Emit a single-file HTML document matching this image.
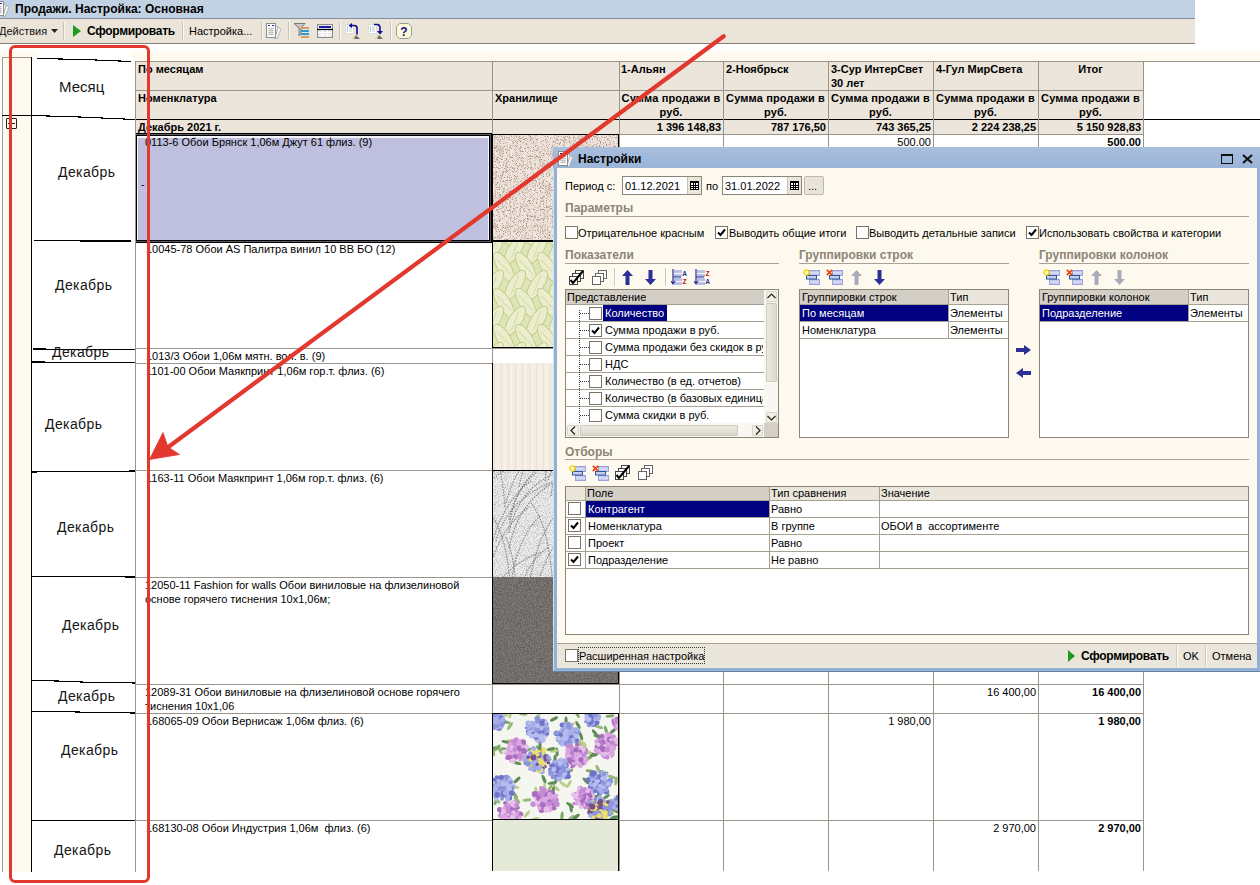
<!DOCTYPE html>
<html><head><meta charset="utf-8">
<style>
*{margin:0;padding:0;box-sizing:border-box}
html,body{width:1260px;height:885px;overflow:hidden;background:#fff}
body{position:relative;font-family:"Liberation Sans",sans-serif;font-size:11px;color:#000}
.a{position:absolute}
.t{position:absolute;white-space:nowrap;line-height:14px}
.b{font-weight:bold}
.r{text-align:right}
.c{text-align:center}
</style></head><body>

<div class="a" style="left:0px;top:0px;width:1195px;height:19px;background:#c3d2e2;border-bottom:1px solid #7f8ea3"></div>
<div class="t b" style="left:15px;top:0px;font-size:12px;line-height:19px">Продажи. Настройка: Основная</div>
<svg class="a" style="left:-7px;top:0px" width="18" height="18" viewBox="0 0 18 18">
<path d="M8 3L16 7L12 17L4 14z" fill="#f4f4f4" stroke="#8a8a8a" stroke-width=".8" stroke-dasharray="1 .6"/>
<path d="M7 2L13 5L10 16L3 14z" fill="#fafafa" stroke="#9a9a9a" stroke-width=".8"/>
<rect x="1.5" y="1.5" width="9" height="14" fill="#fff" stroke="#8c8c8c"/>
<path d="M3 3.5h2M7 3.5h2" stroke="#1a1aa0" stroke-width="1.2"/>
<path d="M3 6.5h6M3 8.5h6M3 10.5h6M3 12.5h6M5 5.5v8M7 5.5v8" stroke="#b8b8b8" stroke-width=".8"/>
</svg>
<div class="a" style="left:0px;top:19px;width:1195px;height:25px;background:#ebe5d9;border-bottom:1px solid #857f74"></div>
<div class="t " style="left:-1px;top:19px;line-height:25px;color:#111">Действия</div>
<svg class="a" style="left:51px;top:29px" width="7" height="4"><path d="M0 0h7L3.5 4z" fill="#222"/></svg>
<div class="a" style="left:63px;top:22px;width:1px;height:18px;background:#c9c3b7"></div>
<div class="a" style="left:64px;top:22px;width:1px;height:18px;background:#fbf8f2"></div>
<div class="a" style="left:182px;top:22px;width:1px;height:18px;background:#c9c3b7"></div>
<div class="a" style="left:183px;top:22px;width:1px;height:18px;background:#fbf8f2"></div>
<div class="a" style="left:261px;top:22px;width:1px;height:18px;background:#c9c3b7"></div>
<div class="a" style="left:262px;top:22px;width:1px;height:18px;background:#fbf8f2"></div>
<div class="a" style="left:288px;top:22px;width:1px;height:18px;background:#c9c3b7"></div>
<div class="a" style="left:289px;top:22px;width:1px;height:18px;background:#fbf8f2"></div>
<div class="a" style="left:339px;top:22px;width:1px;height:18px;background:#c9c3b7"></div>
<div class="a" style="left:340px;top:22px;width:1px;height:18px;background:#fbf8f2"></div>
<div class="a" style="left:390px;top:22px;width:1px;height:18px;background:#c9c3b7"></div>
<div class="a" style="left:391px;top:22px;width:1px;height:18px;background:#fbf8f2"></div>
<svg class="a" style="left:73px;top:25px" width="8" height="12"><path d="M0 0L8 6L0 12z" fill="#1e9a1e"/></svg>
<div class="t b" style="left:87px;top:19px;font-size:12px;line-height:25px;letter-spacing:-0.3px">Сформировать</div>
<div class="t " style="left:189px;top:19px;line-height:25px">Настройка...</div>
<svg class="a" style="left:265px;top:22px" width="18" height="18" viewBox="0 0 18 18">
<path d="M8 3L16 7L12 17L4 14z" fill="#f4f4f4" stroke="#8a8a8a" stroke-width=".8" stroke-dasharray="1 .6"/>
<path d="M7 2L13 5L10 16L3 14z" fill="#fafafa" stroke="#9a9a9a" stroke-width=".8"/>
<rect x="1.5" y="1.5" width="9" height="14" fill="#fff" stroke="#8c8c8c"/>
<path d="M3 3.5h2M7 3.5h2" stroke="#1a1aa0" stroke-width="1.2"/>
<path d="M3 6.5h6M3 8.5h6M3 10.5h6M3 12.5h6M5 5.5v8M7 5.5v8" stroke="#b8b8b8" stroke-width=".8"/>
</svg>
<svg class="a" style="left:294px;top:23px" width="16" height="16" viewBox="0 0 16 16">
<path d="M0 0.5H11L7 5V11L5 13V5z" fill="#c8c8c8" stroke="#6f6f6f" stroke-width=".9"/>
<rect x="7" y="4" width="8" height="2" fill="#d69b66"/><rect x="7" y="7" width="8" height="2" fill="#2e9ad0"/>
<rect x="7" y="10" width="8" height="2" fill="#2e9ad0"/><rect x="7" y="13" width="8" height="2" fill="#d69b66"/>
</svg>
<svg class="a" style="left:317px;top:23px" width="17" height="16" viewBox="0 0 17 16">
<rect x="0.5" y="1.5" width="15" height="13" fill="#e8e8e8" stroke="#8c8c8c"/>
<rect x="2" y="3" width="12" height="2" fill="#1e1ea0"/><path d="M0 6.5h16" stroke="#000" stroke-width="1.2"/>
<path d="M1 9.5h14M1 12h14M5.5 7v7M10.5 7v7" stroke="#fff" stroke-width="1"/>
</svg>
<svg class="a" style="left:345px;top:23px" width="17" height="17" viewBox="0 0 17 17"><rect x="0.5" y="1.5" width="8" height="9" fill="#fff" stroke="#ddd"/><path d="M2 4h1M2 6h1M2 8h1" stroke="#2cb8c8" stroke-width="1"/><path d="M4 4h3M4 6h3M4 8h3" stroke="#bbb" stroke-width=".8"/><path d="M7 16L11 12L15 16z" fill="#6e6e60"/><path d="M7 16L11 12L9 16z" fill="#eeeab0"/><path d="M12 11.5V5Q12 2.5 9 2.5H6" stroke="#0c0c9a" stroke-width="1.6" fill="none"/><path d="M3.5 2.5L7 0V5z" fill="#0c0c9a"/></svg>
<svg class="a" style="left:368px;top:23px" width="17" height="17" viewBox="0 0 17 17"><rect x="0.5" y="1.5" width="8" height="9" fill="#fff" stroke="#ddd"/><path d="M2 4h1M2 6h1M2 8h1" stroke="#2cb8c8" stroke-width="1"/><path d="M4 4h3M4 6h3M4 8h3" stroke="#bbb" stroke-width=".8"/><path d="M7 16L11 12L15 16z" fill="#6e6e60"/><path d="M7 16L11 12L9 16z" fill="#eeeab0"/><path d="M6 1.5H9Q12 1.5 12 5V9" stroke="#0c0c9a" stroke-width="1.6" fill="none"/><path d="M9 8H15L12 11.5z" fill="#0c0c9a"/></svg>
<svg class="a" style="left:396px;top:23px" width="17" height="16" viewBox="0 0 17 16">
<path d="M3.5 0.5H12.5L15.5 3.5V12.5L12.5 15.5H3.5L0.5 12.5V3.5z" fill="#fcfad2" stroke="#9c9c9c"/>
<text x="8" y="12.5" text-anchor="middle" font-family="Liberation Sans" font-weight="bold" font-size="12" fill="#0c0c9a">?</text>
</svg>
<div class="a" style="left:0px;top:44px;width:1260px;height:17px;background:linear-gradient(#fff 0,#fff 5px,#fffbf0 9px,#fffaef 17px)"></div>
<div class="a" style="left:135px;top:61px;width:1008px;height:73px;background:#ebe5db"></div>
<div class="a" style="left:135px;top:61px;width:1125px;height:1px;background:#9b9589"></div>
<div class="a" style="left:135px;top:90px;width:1008px;height:1px;background:#9b9589"></div>
<div class="a" style="left:135px;top:119px;width:1125px;height:1px;background:#000"></div>
<div class="a" style="left:135px;top:134px;width:1008px;height:1px;background:#9b9589"></div>
<div class="a" style="left:135px;top:61px;width:1px;height:58px;background:#9b9589"></div>
<div class="a" style="left:492px;top:61px;width:1px;height:58px;background:#9b9589"></div>
<div class="a" style="left:619px;top:61px;width:1px;height:58px;background:#9b9589"></div>
<div class="a" style="left:723px;top:61px;width:1px;height:58px;background:#9b9589"></div>
<div class="a" style="left:828px;top:61px;width:1px;height:58px;background:#9b9589"></div>
<div class="a" style="left:933px;top:61px;width:1px;height:58px;background:#9b9589"></div>
<div class="a" style="left:1038px;top:61px;width:1px;height:58px;background:#9b9589"></div>
<div class="a" style="left:1143px;top:61px;width:1px;height:58px;background:#9b9589"></div>
<div class="a" style="left:492px;top:119px;width:1px;height:15px;background:#9b9589"></div>
<div class="a" style="left:619px;top:119px;width:1px;height:15px;background:#9b9589"></div>
<div class="a" style="left:723px;top:119px;width:1px;height:15px;background:#9b9589"></div>
<div class="a" style="left:828px;top:119px;width:1px;height:15px;background:#9b9589"></div>
<div class="a" style="left:933px;top:119px;width:1px;height:15px;background:#9b9589"></div>
<div class="a" style="left:1038px;top:119px;width:1px;height:15px;background:#9b9589"></div>
<div class="a" style="left:1143px;top:119px;width:1px;height:15px;background:#9b9589"></div>
<div class="t b" style="left:138px;top:62px;">По месяцам</div>
<div class="t b" style="left:621px;top:62px;">1-Альян</div>
<div class="t b" style="left:726px;top:62px;">2-Ноябрьск</div>
<div class="t b" style="left:831px;top:62px;">3-Сур ИнтерСвет<br>30 лет</div>
<div class="t b" style="left:936px;top:62px;">4-Гул МирСвета</div>
<div class="t c b" style="left:1038px;top:62px;width:105px;">Итог</div>
<div class="t b" style="left:138px;top:91px;">Номенклатура</div>
<div class="t b" style="left:495px;top:91px;">Хранилище</div>
<div class="t c b" style="left:619px;top:91px;width:104px;letter-spacing:0.15px">Сумма продажи в<br>руб.</div>
<div class="t c b" style="left:723px;top:91px;width:105px;letter-spacing:0.15px">Сумма продажи в<br>руб.</div>
<div class="t c b" style="left:828px;top:91px;width:105px;letter-spacing:0.15px">Сумма продажи в<br>руб.</div>
<div class="t c b" style="left:933px;top:91px;width:105px;letter-spacing:0.15px">Сумма продажи в<br>руб.</div>
<div class="t c b" style="left:1038px;top:91px;width:105px;letter-spacing:0.15px">Сумма продажи в<br>руб.</div>
<div class="t b" style="left:138px;top:120px;">Декабрь 2021 г.</div>
<div class="t r b" style="left:619px;top:120px;width:102px;">1 396 148,83</div>
<div class="t r b" style="left:723px;top:120px;width:103px;">787 176,50</div>
<div class="t r b" style="left:828px;top:120px;width:103px;">743 365,25</div>
<div class="t r b" style="left:933px;top:120px;width:103px;">2 224 238,25</div>
<div class="t r b" style="left:1038px;top:120px;width:103px;">5 150 928,83</div>
<div class="a" style="left:135px;top:241px;width:1008px;height:1px;background:#9b9589"></div>
<div class="a" style="left:135px;top:348px;width:1008px;height:1px;background:#9b9589"></div>
<div class="a" style="left:135px;top:363px;width:1008px;height:1px;background:#9b9589"></div>
<div class="a" style="left:135px;top:470px;width:1008px;height:1px;background:#9b9589"></div>
<div class="a" style="left:135px;top:577px;width:1008px;height:1px;background:#9b9589"></div>
<div class="a" style="left:135px;top:684px;width:1008px;height:1px;background:#9b9589"></div>
<div class="a" style="left:135px;top:713px;width:1008px;height:1px;background:#9b9589"></div>
<div class="a" style="left:135px;top:820px;width:1008px;height:1px;background:#9b9589"></div>
<div class="a" style="left:135px;top:134px;width:1px;height:737px;background:#9b9589"></div>
<div class="a" style="left:492px;top:134px;width:1px;height:737px;background:#9b9589"></div>
<div class="a" style="left:619px;top:134px;width:1px;height:737px;background:#9b9589"></div>
<div class="a" style="left:723px;top:134px;width:1px;height:737px;background:#9b9589"></div>
<div class="a" style="left:828px;top:134px;width:1px;height:737px;background:#9b9589"></div>
<div class="a" style="left:933px;top:134px;width:1px;height:737px;background:#9b9589"></div>
<div class="a" style="left:1038px;top:134px;width:1px;height:737px;background:#9b9589"></div>
<div class="a" style="left:1143px;top:134px;width:1px;height:737px;background:#9b9589"></div>
<div class="a" style="left:134px;top:133px;width:358px;height:110px;background:#bfbfdf;border:1px solid #000;box-shadow:inset 0 0 0 1px #5a5a66,inset 0 0 0 2px #000,inset 0 1px 0 3px #f4f4fa"></div>
<div class="t " style="left:145px;top:135px;">0113-6 Обои Брянск 1,06м Джут 61 флиз. (9)</div>
<div class="t " style="left:146px;top:242px;">10045-78 Обои AS Палитра винил 10 ВВ БО (12)</div>
<div class="t " style="left:146px;top:349px;">1013/3 Обои 1,06м мятн. вол. в. (9)</div>
<div class="t " style="left:146px;top:364px;">1101-00 Обои Маякпринт 1,06м гор.т. флиз. (6)</div>
<div class="t " style="left:146px;top:471px;">1163-11 Обои Маякпринт 1,06м гор.т. флиз. (6)</div>
<div class="t " style="left:145px;top:578px;">12050-11 Fashion for walls Обои виниловые на флизелиновой<br>основе горячего тиснения 10x1,06м;</div>
<div class="t " style="left:145px;top:685px;">12089-31 Обои виниловые на флизелиновой основе горячего<br>тиснения 10x1,06</div>
<div class="t " style="left:146px;top:714px;">168065-09 Обои Вернисаж 1,06м флиз. (6)</div>
<div class="t " style="left:146px;top:821px;">168130-08 Обои Индустрия 1,06м&nbsp; флиз. (6)</div>
<div class="t " style="left:141px;top:177px;">-</div>
<div class="t r " style="left:828px;top:135px;width:103px;">500.00</div>
<div class="t r b" style="left:1038px;top:135px;width:103px;">500.00</div>
<div class="t r " style="left:933px;top:685px;width:103px;">16 400,00</div>
<div class="t r b" style="left:1038px;top:685px;width:103px;">16 400,00</div>
<div class="t r " style="left:828px;top:714px;width:103px;">1 980,00</div>
<div class="t r b" style="left:1038px;top:714px;width:103px;">1 980,00</div>
<div class="t r " style="left:933px;top:821px;width:103px;">2 970,00</div>
<div class="t r b" style="left:1038px;top:821px;width:103px;">2 970,00</div>
<svg width="0" height="0" style="position:absolute"><defs>
<filter id="nz1" x="0" y="0" width="100%" height="100%"><feTurbulence type="fractalNoise" baseFrequency="1.3 0.9" numOctaves="2" seed="3"/><feColorMatrix values="0 0 0 0 0.42  0 0 0 0 0.3  0 0 0 0 0.25  0 0 0 -8 3.5"/></filter>
<filter id="nz1b" x="0" y="0" width="100%" height="100%"><feTurbulence type="fractalNoise" baseFrequency="0.6 0.08" numOctaves="2" seed="9"/><feColorMatrix values="0 0 0 0 0.55  0 0 0 0 0.42  0 0 0 0 0.35  0 0 0 -3 1.6"/></filter>
<filter id="nz2" x="0" y="0" width="100%" height="100%"><feTurbulence type="fractalNoise" baseFrequency="0.7" numOctaves="2" seed="7"/><feColorMatrix values="0 0 0 0 0  0 0 0 0 0  0 0 0 0 0  0 0 0 -3 1.7"/></filter>
<filter id="nz2w" x="0" y="0" width="100%" height="100%"><feTurbulence type="fractalNoise" baseFrequency="0.7" numOctaves="2" seed="17"/><feColorMatrix values="0 0 0 0 1  0 0 0 0 1  0 0 0 0 1  0 0 0 -3 1.55"/></filter>
<filter id="nz3" x="0" y="0" width="100%" height="100%"><feTurbulence type="fractalNoise" baseFrequency="1.1" numOctaves="1" seed="11"/><feColorMatrix values="0 0 0 0 0.3  0 0 0 0 0.3  0 0 0 0 0.3  0 0 0 -3.5 1.9"/></filter>
<filter id="nz4" x="0" y="0" width="100%" height="100%"><feTurbulence type="fractalNoise" baseFrequency="0.8" numOctaves="1" seed="21"/><feColorMatrix values="0 0 0 0 1  0 0 0 0 1  0 0 0 0 1  0 0 0 -3 1.6"/></filter>
<pattern id="stripes" width="7" height="10" patternUnits="userSpaceOnUse"><rect width="7" height="10" fill="#f4ede3"/><rect x="2" width="1" height="10" fill="#ebe2d5"/><rect x="5" width="1" height="10" fill="#f8f3ec"/></pattern>
</defs></svg>
<svg class="a" style="left:492px;top:134px" width="127" height="107" viewBox="0 0 127 107"><rect width="127" height="107" fill="#f0e6de"/><rect width="127" height="107" filter="url(#nz1)"/><rect width="127" height="107" filter="url(#nz1b)" opacity=".5"/></svg>
<div class="a" style="left:492px;top:134px;width:1px;height:107px;background:#000"></div>
<div class="a" style="left:618px;top:134px;width:1px;height:107px;background:#000"></div>
<div class="a" style="left:492px;top:134px;width:127px;height:1px;background:#000"></div>
<div class="a" style="left:492px;top:240px;width:127px;height:1px;background:#000"></div>
<svg class="a" style="left:492px;top:241px" width="127" height="107" viewBox="0 0 127 107"><rect width="127" height="107" fill="#dce3b3"/><ellipse cx="-10" cy="-10" rx="6.5" ry="17" transform="rotate(-32 -10 -10)" fill="#eaecc9" stroke="#bccb80" stroke-width="1"/><path d="M-12 -20 L-8 0" stroke="#d2dba0" stroke-width="1" transform="rotate(-32 -10 -10)"/><ellipse cx="12" cy="-10" rx="6.5" ry="17" transform="rotate(-32 12 -10)" fill="#eaecc9" stroke="#bccb80" stroke-width="1"/><path d="M10 -20 L14 0" stroke="#d2dba0" stroke-width="1" transform="rotate(-32 12 -10)"/><ellipse cx="34" cy="-10" rx="6.5" ry="17" transform="rotate(-32 34 -10)" fill="#eaecc9" stroke="#bccb80" stroke-width="1"/><path d="M32 -20 L36 0" stroke="#d2dba0" stroke-width="1" transform="rotate(-32 34 -10)"/><ellipse cx="56" cy="-10" rx="6.5" ry="17" transform="rotate(-32 56 -10)" fill="#eaecc9" stroke="#bccb80" stroke-width="1"/><path d="M54 -20 L58 0" stroke="#d2dba0" stroke-width="1" transform="rotate(-32 56 -10)"/><ellipse cx="78" cy="-10" rx="6.5" ry="17" transform="rotate(-32 78 -10)" fill="#eaecc9" stroke="#bccb80" stroke-width="1"/><path d="M76 -20 L80 0" stroke="#d2dba0" stroke-width="1" transform="rotate(-32 78 -10)"/><ellipse cx="100" cy="-10" rx="6.5" ry="17" transform="rotate(-32 100 -10)" fill="#eaecc9" stroke="#bccb80" stroke-width="1"/><path d="M98 -20 L102 0" stroke="#d2dba0" stroke-width="1" transform="rotate(-32 100 -10)"/><ellipse cx="122" cy="-10" rx="6.5" ry="17" transform="rotate(-32 122 -10)" fill="#eaecc9" stroke="#bccb80" stroke-width="1"/><path d="M120 -20 L124 0" stroke="#d2dba0" stroke-width="1" transform="rotate(-32 122 -10)"/><ellipse cx="1" cy="8" rx="6.5" ry="17" transform="rotate(32 1 8)" fill="#eaecc9" stroke="#bccb80" stroke-width="1"/><path d="M-1 -2 L3 18" stroke="#d2dba0" stroke-width="1" transform="rotate(32 1 8)"/><ellipse cx="23" cy="8" rx="6.5" ry="17" transform="rotate(32 23 8)" fill="#eaecc9" stroke="#bccb80" stroke-width="1"/><path d="M21 -2 L25 18" stroke="#d2dba0" stroke-width="1" transform="rotate(32 23 8)"/><ellipse cx="45" cy="8" rx="6.5" ry="17" transform="rotate(32 45 8)" fill="#eaecc9" stroke="#bccb80" stroke-width="1"/><path d="M43 -2 L47 18" stroke="#d2dba0" stroke-width="1" transform="rotate(32 45 8)"/><ellipse cx="67" cy="8" rx="6.5" ry="17" transform="rotate(32 67 8)" fill="#eaecc9" stroke="#bccb80" stroke-width="1"/><path d="M65 -2 L69 18" stroke="#d2dba0" stroke-width="1" transform="rotate(32 67 8)"/><ellipse cx="89" cy="8" rx="6.5" ry="17" transform="rotate(32 89 8)" fill="#eaecc9" stroke="#bccb80" stroke-width="1"/><path d="M87 -2 L91 18" stroke="#d2dba0" stroke-width="1" transform="rotate(32 89 8)"/><ellipse cx="111" cy="8" rx="6.5" ry="17" transform="rotate(32 111 8)" fill="#eaecc9" stroke="#bccb80" stroke-width="1"/><path d="M109 -2 L113 18" stroke="#d2dba0" stroke-width="1" transform="rotate(32 111 8)"/><ellipse cx="133" cy="8" rx="6.5" ry="17" transform="rotate(32 133 8)" fill="#eaecc9" stroke="#bccb80" stroke-width="1"/><path d="M131 -2 L135 18" stroke="#d2dba0" stroke-width="1" transform="rotate(32 133 8)"/><ellipse cx="-10" cy="26" rx="6.5" ry="17" transform="rotate(-32 -10 26)" fill="#eaecc9" stroke="#bccb80" stroke-width="1"/><path d="M-12 16 L-8 36" stroke="#d2dba0" stroke-width="1" transform="rotate(-32 -10 26)"/><ellipse cx="12" cy="26" rx="6.5" ry="17" transform="rotate(-32 12 26)" fill="#eaecc9" stroke="#bccb80" stroke-width="1"/><path d="M10 16 L14 36" stroke="#d2dba0" stroke-width="1" transform="rotate(-32 12 26)"/><ellipse cx="34" cy="26" rx="6.5" ry="17" transform="rotate(-32 34 26)" fill="#eaecc9" stroke="#bccb80" stroke-width="1"/><path d="M32 16 L36 36" stroke="#d2dba0" stroke-width="1" transform="rotate(-32 34 26)"/><ellipse cx="56" cy="26" rx="6.5" ry="17" transform="rotate(-32 56 26)" fill="#eaecc9" stroke="#bccb80" stroke-width="1"/><path d="M54 16 L58 36" stroke="#d2dba0" stroke-width="1" transform="rotate(-32 56 26)"/><ellipse cx="78" cy="26" rx="6.5" ry="17" transform="rotate(-32 78 26)" fill="#eaecc9" stroke="#bccb80" stroke-width="1"/><path d="M76 16 L80 36" stroke="#d2dba0" stroke-width="1" transform="rotate(-32 78 26)"/><ellipse cx="100" cy="26" rx="6.5" ry="17" transform="rotate(-32 100 26)" fill="#eaecc9" stroke="#bccb80" stroke-width="1"/><path d="M98 16 L102 36" stroke="#d2dba0" stroke-width="1" transform="rotate(-32 100 26)"/><ellipse cx="122" cy="26" rx="6.5" ry="17" transform="rotate(-32 122 26)" fill="#eaecc9" stroke="#bccb80" stroke-width="1"/><path d="M120 16 L124 36" stroke="#d2dba0" stroke-width="1" transform="rotate(-32 122 26)"/><ellipse cx="1" cy="44" rx="6.5" ry="17" transform="rotate(32 1 44)" fill="#eaecc9" stroke="#bccb80" stroke-width="1"/><path d="M-1 34 L3 54" stroke="#d2dba0" stroke-width="1" transform="rotate(32 1 44)"/><ellipse cx="23" cy="44" rx="6.5" ry="17" transform="rotate(32 23 44)" fill="#eaecc9" stroke="#bccb80" stroke-width="1"/><path d="M21 34 L25 54" stroke="#d2dba0" stroke-width="1" transform="rotate(32 23 44)"/><ellipse cx="45" cy="44" rx="6.5" ry="17" transform="rotate(32 45 44)" fill="#eaecc9" stroke="#bccb80" stroke-width="1"/><path d="M43 34 L47 54" stroke="#d2dba0" stroke-width="1" transform="rotate(32 45 44)"/><ellipse cx="67" cy="44" rx="6.5" ry="17" transform="rotate(32 67 44)" fill="#eaecc9" stroke="#bccb80" stroke-width="1"/><path d="M65 34 L69 54" stroke="#d2dba0" stroke-width="1" transform="rotate(32 67 44)"/><ellipse cx="89" cy="44" rx="6.5" ry="17" transform="rotate(32 89 44)" fill="#eaecc9" stroke="#bccb80" stroke-width="1"/><path d="M87 34 L91 54" stroke="#d2dba0" stroke-width="1" transform="rotate(32 89 44)"/><ellipse cx="111" cy="44" rx="6.5" ry="17" transform="rotate(32 111 44)" fill="#eaecc9" stroke="#bccb80" stroke-width="1"/><path d="M109 34 L113 54" stroke="#d2dba0" stroke-width="1" transform="rotate(32 111 44)"/><ellipse cx="133" cy="44" rx="6.5" ry="17" transform="rotate(32 133 44)" fill="#eaecc9" stroke="#bccb80" stroke-width="1"/><path d="M131 34 L135 54" stroke="#d2dba0" stroke-width="1" transform="rotate(32 133 44)"/><ellipse cx="-10" cy="62" rx="6.5" ry="17" transform="rotate(-32 -10 62)" fill="#eaecc9" stroke="#bccb80" stroke-width="1"/><path d="M-12 52 L-8 72" stroke="#d2dba0" stroke-width="1" transform="rotate(-32 -10 62)"/><ellipse cx="12" cy="62" rx="6.5" ry="17" transform="rotate(-32 12 62)" fill="#eaecc9" stroke="#bccb80" stroke-width="1"/><path d="M10 52 L14 72" stroke="#d2dba0" stroke-width="1" transform="rotate(-32 12 62)"/><ellipse cx="34" cy="62" rx="6.5" ry="17" transform="rotate(-32 34 62)" fill="#eaecc9" stroke="#bccb80" stroke-width="1"/><path d="M32 52 L36 72" stroke="#d2dba0" stroke-width="1" transform="rotate(-32 34 62)"/><ellipse cx="56" cy="62" rx="6.5" ry="17" transform="rotate(-32 56 62)" fill="#eaecc9" stroke="#bccb80" stroke-width="1"/><path d="M54 52 L58 72" stroke="#d2dba0" stroke-width="1" transform="rotate(-32 56 62)"/><ellipse cx="78" cy="62" rx="6.5" ry="17" transform="rotate(-32 78 62)" fill="#eaecc9" stroke="#bccb80" stroke-width="1"/><path d="M76 52 L80 72" stroke="#d2dba0" stroke-width="1" transform="rotate(-32 78 62)"/><ellipse cx="100" cy="62" rx="6.5" ry="17" transform="rotate(-32 100 62)" fill="#eaecc9" stroke="#bccb80" stroke-width="1"/><path d="M98 52 L102 72" stroke="#d2dba0" stroke-width="1" transform="rotate(-32 100 62)"/><ellipse cx="122" cy="62" rx="6.5" ry="17" transform="rotate(-32 122 62)" fill="#eaecc9" stroke="#bccb80" stroke-width="1"/><path d="M120 52 L124 72" stroke="#d2dba0" stroke-width="1" transform="rotate(-32 122 62)"/><ellipse cx="1" cy="80" rx="6.5" ry="17" transform="rotate(32 1 80)" fill="#eaecc9" stroke="#bccb80" stroke-width="1"/><path d="M-1 70 L3 90" stroke="#d2dba0" stroke-width="1" transform="rotate(32 1 80)"/><ellipse cx="23" cy="80" rx="6.5" ry="17" transform="rotate(32 23 80)" fill="#eaecc9" stroke="#bccb80" stroke-width="1"/><path d="M21 70 L25 90" stroke="#d2dba0" stroke-width="1" transform="rotate(32 23 80)"/><ellipse cx="45" cy="80" rx="6.5" ry="17" transform="rotate(32 45 80)" fill="#eaecc9" stroke="#bccb80" stroke-width="1"/><path d="M43 70 L47 90" stroke="#d2dba0" stroke-width="1" transform="rotate(32 45 80)"/><ellipse cx="67" cy="80" rx="6.5" ry="17" transform="rotate(32 67 80)" fill="#eaecc9" stroke="#bccb80" stroke-width="1"/><path d="M65 70 L69 90" stroke="#d2dba0" stroke-width="1" transform="rotate(32 67 80)"/><ellipse cx="89" cy="80" rx="6.5" ry="17" transform="rotate(32 89 80)" fill="#eaecc9" stroke="#bccb80" stroke-width="1"/><path d="M87 70 L91 90" stroke="#d2dba0" stroke-width="1" transform="rotate(32 89 80)"/><ellipse cx="111" cy="80" rx="6.5" ry="17" transform="rotate(32 111 80)" fill="#eaecc9" stroke="#bccb80" stroke-width="1"/><path d="M109 70 L113 90" stroke="#d2dba0" stroke-width="1" transform="rotate(32 111 80)"/><ellipse cx="133" cy="80" rx="6.5" ry="17" transform="rotate(32 133 80)" fill="#eaecc9" stroke="#bccb80" stroke-width="1"/><path d="M131 70 L135 90" stroke="#d2dba0" stroke-width="1" transform="rotate(32 133 80)"/><ellipse cx="-10" cy="98" rx="6.5" ry="17" transform="rotate(-32 -10 98)" fill="#eaecc9" stroke="#bccb80" stroke-width="1"/><path d="M-12 88 L-8 108" stroke="#d2dba0" stroke-width="1" transform="rotate(-32 -10 98)"/><ellipse cx="12" cy="98" rx="6.5" ry="17" transform="rotate(-32 12 98)" fill="#eaecc9" stroke="#bccb80" stroke-width="1"/><path d="M10 88 L14 108" stroke="#d2dba0" stroke-width="1" transform="rotate(-32 12 98)"/><ellipse cx="34" cy="98" rx="6.5" ry="17" transform="rotate(-32 34 98)" fill="#eaecc9" stroke="#bccb80" stroke-width="1"/><path d="M32 88 L36 108" stroke="#d2dba0" stroke-width="1" transform="rotate(-32 34 98)"/><ellipse cx="56" cy="98" rx="6.5" ry="17" transform="rotate(-32 56 98)" fill="#eaecc9" stroke="#bccb80" stroke-width="1"/><path d="M54 88 L58 108" stroke="#d2dba0" stroke-width="1" transform="rotate(-32 56 98)"/><ellipse cx="78" cy="98" rx="6.5" ry="17" transform="rotate(-32 78 98)" fill="#eaecc9" stroke="#bccb80" stroke-width="1"/><path d="M76 88 L80 108" stroke="#d2dba0" stroke-width="1" transform="rotate(-32 78 98)"/><ellipse cx="100" cy="98" rx="6.5" ry="17" transform="rotate(-32 100 98)" fill="#eaecc9" stroke="#bccb80" stroke-width="1"/><path d="M98 88 L102 108" stroke="#d2dba0" stroke-width="1" transform="rotate(-32 100 98)"/><ellipse cx="122" cy="98" rx="6.5" ry="17" transform="rotate(-32 122 98)" fill="#eaecc9" stroke="#bccb80" stroke-width="1"/><path d="M120 88 L124 108" stroke="#d2dba0" stroke-width="1" transform="rotate(-32 122 98)"/><ellipse cx="1" cy="116" rx="6.5" ry="17" transform="rotate(32 1 116)" fill="#eaecc9" stroke="#bccb80" stroke-width="1"/><path d="M-1 106 L3 126" stroke="#d2dba0" stroke-width="1" transform="rotate(32 1 116)"/><ellipse cx="23" cy="116" rx="6.5" ry="17" transform="rotate(32 23 116)" fill="#eaecc9" stroke="#bccb80" stroke-width="1"/><path d="M21 106 L25 126" stroke="#d2dba0" stroke-width="1" transform="rotate(32 23 116)"/><ellipse cx="45" cy="116" rx="6.5" ry="17" transform="rotate(32 45 116)" fill="#eaecc9" stroke="#bccb80" stroke-width="1"/><path d="M43 106 L47 126" stroke="#d2dba0" stroke-width="1" transform="rotate(32 45 116)"/><ellipse cx="67" cy="116" rx="6.5" ry="17" transform="rotate(32 67 116)" fill="#eaecc9" stroke="#bccb80" stroke-width="1"/><path d="M65 106 L69 126" stroke="#d2dba0" stroke-width="1" transform="rotate(32 67 116)"/><ellipse cx="89" cy="116" rx="6.5" ry="17" transform="rotate(32 89 116)" fill="#eaecc9" stroke="#bccb80" stroke-width="1"/><path d="M87 106 L91 126" stroke="#d2dba0" stroke-width="1" transform="rotate(32 89 116)"/><ellipse cx="111" cy="116" rx="6.5" ry="17" transform="rotate(32 111 116)" fill="#eaecc9" stroke="#bccb80" stroke-width="1"/><path d="M109 106 L113 126" stroke="#d2dba0" stroke-width="1" transform="rotate(32 111 116)"/><ellipse cx="133" cy="116" rx="6.5" ry="17" transform="rotate(32 133 116)" fill="#eaecc9" stroke="#bccb80" stroke-width="1"/><path d="M131 106 L135 126" stroke="#d2dba0" stroke-width="1" transform="rotate(32 133 116)"/><rect width="127" height="107" filter="url(#nz4)" opacity=".35"/></svg>
<div class="a" style="left:492px;top:241px;width:1px;height:107px;background:#000"></div>
<div class="a" style="left:618px;top:241px;width:1px;height:107px;background:#000"></div>
<div class="a" style="left:492px;top:241px;width:127px;height:1px;background:#000"></div>
<div class="a" style="left:492px;top:347px;width:127px;height:1px;background:#000"></div>
<svg class="a" style="left:492px;top:363px" width="127" height="107" viewBox="0 0 127 107"><rect width="127" height="107" fill="url(#stripes)"/></svg>
<div class="a" style="left:492px;top:363px;width:1px;height:107px;background:#000"></div>
<div class="a" style="left:618px;top:363px;width:1px;height:107px;background:#000"></div>
<svg class="a" style="left:492px;top:470px" width="127" height="107" viewBox="0 0 127 107"><rect width="127" height="107" fill="#ececec"/><path d="M60 106 q -4 -51 -21 -73" stroke="#808080" stroke-width="1.1" fill="none" stroke-dasharray="1.5 1.2"/><path d="M45 119 q 10 -51 51 -72" stroke="#808080" stroke-width="1.1" fill="none" stroke-dasharray="1.5 1.2"/><path d="M104 25 q 8 -41 39 -59" stroke="#808080" stroke-width="1.1" fill="none" stroke-dasharray="1.5 1.2"/><path d="M-24 42 q 10 -38 49 -54" stroke="#808080" stroke-width="1.1" fill="none" stroke-dasharray="1.5 1.2"/><path d="M107 110 q 5 -33 26 -47" stroke="#808080" stroke-width="1.1" fill="none" stroke-dasharray="1.5 1.2"/><path d="M59 26 q 4 -35 20 -50" stroke="#808080" stroke-width="1.1" fill="none" stroke-dasharray="1.5 1.2"/><path d="M-6 138 q 11 -39 55 -56" stroke="#808080" stroke-width="1.1" fill="none" stroke-dasharray="1.5 1.2"/><path d="M-8 124 q 9 -61 45 -87" stroke="#808080" stroke-width="1.1" fill="none" stroke-dasharray="1.5 1.2"/><path d="M71 136 q 11 -29 56 -41" stroke="#808080" stroke-width="1.1" fill="none" stroke-dasharray="1.5 1.2"/><path d="M26 132 q 6 -39 31 -55" stroke="#808080" stroke-width="1.1" fill="none" stroke-dasharray="1.5 1.2"/><path d="M56 10 q 9 -30 47 -43" stroke="#808080" stroke-width="1.1" fill="none" stroke-dasharray="1.5 1.2"/><path d="M17 50 q 10 -45 48 -64" stroke="#808080" stroke-width="1.1" fill="none" stroke-dasharray="1.5 1.2"/><path d="M73 17 q 12 -61 59 -87" stroke="#808080" stroke-width="1.1" fill="none" stroke-dasharray="1.5 1.2"/><path d="M17 63 q 8 -41 42 -58" stroke="#808080" stroke-width="1.1" fill="none" stroke-dasharray="1.5 1.2"/><path d="M53 11 q 4 -50 22 -71" stroke="#808080" stroke-width="1.1" fill="none" stroke-dasharray="1.5 1.2"/><path d="M113 25 q 6 -40 30 -57" stroke="#808080" stroke-width="1.1" fill="none" stroke-dasharray="1.5 1.2"/><path d="M17 78 q 10 -49 51 -69" stroke="#808080" stroke-width="1.1" fill="none" stroke-dasharray="1.5 1.2"/><path d="M85 58 q 6 -61 32 -87" stroke="#808080" stroke-width="1.1" fill="none" stroke-dasharray="1.5 1.2"/><path d="M-25 54 q 9 -40 44 -57" stroke="#808080" stroke-width="1.1" fill="none" stroke-dasharray="1.5 1.2"/><path d="M108 81 q 6 -39 32 -55" stroke="#808080" stroke-width="1.1" fill="none" stroke-dasharray="1.5 1.2"/><path d="M88 91 q 10 -63 49 -90" stroke="#808080" stroke-width="1.1" fill="none" stroke-dasharray="1.5 1.2"/><path d="M-14 16 q -5 -60 -24 -86" stroke="#808080" stroke-width="1.1" fill="none" stroke-dasharray="1.5 1.2"/><path d="M-35 106 q 7 -44 34 -63" stroke="#808080" stroke-width="1.1" fill="none" stroke-dasharray="1.5 1.2"/><path d="M27 17 q 11 -56 57 -80" stroke="#808080" stroke-width="1.1" fill="none" stroke-dasharray="1.5 1.2"/><path d="M13 37 q -5 -61 -24 -87" stroke="#808080" stroke-width="1.1" fill="none" stroke-dasharray="1.5 1.2"/><path d="M61 112 q 5 -41 24 -59" stroke="#808080" stroke-width="1.1" fill="none" stroke-dasharray="1.5 1.2"/><path d="M-31 65 q -2 -58 -10 -83" stroke="#808080" stroke-width="1.1" fill="none" stroke-dasharray="1.5 1.2"/><path d="M116 69 q -3 -39 -16 -56" stroke="#808080" stroke-width="1.1" fill="none" stroke-dasharray="1.5 1.2"/><path d="M4 71 q 11 -41 56 -59" stroke="#808080" stroke-width="1.1" fill="none" stroke-dasharray="1.5 1.2"/><path d="M118 135 q 9 -58 45 -83" stroke="#808080" stroke-width="1.1" fill="none" stroke-dasharray="1.5 1.2"/><path d="M-11 74 q -3 -58 -16 -83" stroke="#808080" stroke-width="1.1" fill="none" stroke-dasharray="1.5 1.2"/><path d="M18 112 q -4 -49 -20 -69" stroke="#808080" stroke-width="1.1" fill="none" stroke-dasharray="1.5 1.2"/><path d="M-35 50 q -3 -38 -17 -54" stroke="#808080" stroke-width="1.1" fill="none" stroke-dasharray="1.5 1.2"/><path d="M38 110 q 10 -61 48 -88" stroke="#808080" stroke-width="1.1" fill="none" stroke-dasharray="1.5 1.2"/><path d="M14 33 q 11 -47 54 -67" stroke="#808080" stroke-width="1.1" fill="none" stroke-dasharray="1.5 1.2"/><path d="M0 97 q -3 -51 -15 -72" stroke="#808080" stroke-width="1.1" fill="none" stroke-dasharray="1.5 1.2"/><path d="M88 55 q -4 -61 -18 -87" stroke="#808080" stroke-width="1.1" fill="none" stroke-dasharray="1.5 1.2"/><path d="M25 130 q -2 -44 -11 -62" stroke="#808080" stroke-width="1.1" fill="none" stroke-dasharray="1.5 1.2"/><path d="M18 53 q 5 -35 26 -50" stroke="#808080" stroke-width="1.1" fill="none" stroke-dasharray="1.5 1.2"/><path d="M18 121 q 6 -53 31 -76" stroke="#808080" stroke-width="1.1" fill="none" stroke-dasharray="1.5 1.2"/><path d="M77 32 q -4 -46 -20 -66" stroke="#808080" stroke-width="1.1" fill="none" stroke-dasharray="1.5 1.2"/><path d="M110 49 q -3 -37 -17 -54" stroke="#808080" stroke-width="1.1" fill="none" stroke-dasharray="1.5 1.2"/><path d="M119 35 q -3 -51 -17 -73" stroke="#808080" stroke-width="1.1" fill="none" stroke-dasharray="1.5 1.2"/><path d="M-5 99 q 9 -63 45 -89" stroke="#808080" stroke-width="1.1" fill="none" stroke-dasharray="1.5 1.2"/><path d="M117 32 q 11 -39 56 -56" stroke="#808080" stroke-width="1.1" fill="none" stroke-dasharray="1.5 1.2"/><path d="M-11 35 q 4 -40 21 -58" stroke="#808080" stroke-width="1.1" fill="none" stroke-dasharray="1.5 1.2"/><path d="M66 19 q -2 -60 -11 -85" stroke="#808080" stroke-width="1.1" fill="none" stroke-dasharray="1.5 1.2"/><path d="M-40 63 q 6 -58 31 -83" stroke="#808080" stroke-width="1.1" fill="none" stroke-dasharray="1.5 1.2"/><rect width="127" height="107" filter="url(#nz3)" opacity=".6"/></svg>
<div class="a" style="left:492px;top:470px;width:1px;height:107px;background:#000"></div>
<div class="a" style="left:618px;top:470px;width:1px;height:107px;background:#000"></div>
<div class="a" style="left:492px;top:470px;width:127px;height:1px;background:#000"></div>
<svg class="a" style="left:492px;top:577px" width="127" height="107" viewBox="0 0 127 107"><rect width="127" height="107" fill="#74716e"/><rect width="127" height="107" filter="url(#nz2)" opacity=".22"/><rect width="127" height="107" filter="url(#nz2w)" opacity=".18"/></svg>
<div class="a" style="left:492px;top:577px;width:1px;height:107px;background:#000"></div>
<div class="a" style="left:618px;top:577px;width:1px;height:107px;background:#000"></div>
<div class="a" style="left:492px;top:683px;width:127px;height:1px;background:#000"></div>
<svg class="a" style="left:492px;top:713px" width="127" height="107" viewBox="0 0 127 107"><rect width="127" height="107" fill="#f6f6f0"/><ellipse cx="60" cy="70" rx="4.5" ry="1.6" transform="rotate(170 60 70)" fill="#5f8c58"/><ellipse cx="18" cy="1" rx="4.5" ry="1.6" transform="rotate(95 18 1)" fill="#b8cf8a"/><ellipse cx="35" cy="87" rx="4.5" ry="1.6" transform="rotate(176 35 87)" fill="#96b97a"/><ellipse cx="71" cy="71" rx="4.5" ry="1.6" transform="rotate(37 71 71)" fill="#b8cf8a"/><ellipse cx="47" cy="36" rx="4.5" ry="1.6" transform="rotate(53 47 36)" fill="#7fa86a"/><ellipse cx="73" cy="21" rx="4.5" ry="1.6" transform="rotate(131 73 21)" fill="#5f8c58"/><ellipse cx="87" cy="85" rx="4.5" ry="1.6" transform="rotate(22 87 85)" fill="#7fa86a"/><ellipse cx="117" cy="88" rx="4.5" ry="1.6" transform="rotate(169 117 88)" fill="#96b97a"/><ellipse cx="12" cy="106" rx="4.5" ry="1.6" transform="rotate(113 12 106)" fill="#7fa86a"/><ellipse cx="84" cy="104" rx="4.5" ry="1.6" transform="rotate(138 84 104)" fill="#5f8c58"/><ellipse cx="112" cy="60" rx="4.5" ry="1.6" transform="rotate(178 112 60)" fill="#7fa86a"/><ellipse cx="71" cy="54" rx="4.5" ry="1.6" transform="rotate(21 71 54)" fill="#b8cf8a"/><ellipse cx="77" cy="71" rx="4.5" ry="1.6" transform="rotate(120 77 71)" fill="#b8cf8a"/><ellipse cx="77" cy="58" rx="4.5" ry="1.6" transform="rotate(164 77 58)" fill="#7fa86a"/><ellipse cx="123" cy="104" rx="4.5" ry="1.6" transform="rotate(169 123 104)" fill="#5f8c58"/><ellipse cx="45" cy="39" rx="4.5" ry="1.6" transform="rotate(176 45 39)" fill="#b8cf8a"/><ellipse cx="86" cy="12" rx="4.5" ry="1.6" transform="rotate(60 86 12)" fill="#5f8c58"/><ellipse cx="46" cy="55" rx="4.5" ry="1.6" transform="rotate(128 46 55)" fill="#96b97a"/><ellipse cx="4" cy="88" rx="4.5" ry="1.6" transform="rotate(110 4 88)" fill="#7fa86a"/><ellipse cx="66" cy="24" rx="4.5" ry="1.6" transform="rotate(109 66 24)" fill="#7fa86a"/><ellipse cx="49" cy="83" rx="4.5" ry="1.6" transform="rotate(26 49 83)" fill="#96b97a"/><ellipse cx="23" cy="74" rx="4.5" ry="1.6" transform="rotate(9 23 74)" fill="#b8cf8a"/><ellipse cx="35" cy="37" rx="4.5" ry="1.6" transform="rotate(163 35 37)" fill="#7fa86a"/><ellipse cx="65" cy="39" rx="4.5" ry="1.6" transform="rotate(86 65 39)" fill="#5f8c58"/><ellipse cx="58" cy="75" rx="4.5" ry="1.6" transform="rotate(123 58 75)" fill="#96b97a"/><ellipse cx="121" cy="18" rx="4.5" ry="1.6" transform="rotate(140 121 18)" fill="#5f8c58"/><ellipse cx="23" cy="82" rx="4.5" ry="1.6" transform="rotate(56 23 82)" fill="#7fa86a"/><ellipse cx="120" cy="98" rx="4.5" ry="1.6" transform="rotate(87 120 98)" fill="#96b97a"/><ellipse cx="31" cy="1" rx="4.5" ry="1.6" transform="rotate(10 31 1)" fill="#96b97a"/><ellipse cx="79" cy="105" rx="4.5" ry="1.6" transform="rotate(139 79 105)" fill="#96b97a"/><ellipse cx="3" cy="35" rx="4.5" ry="1.6" transform="rotate(171 3 35)" fill="#5f8c58"/><ellipse cx="81" cy="25" rx="4.5" ry="1.6" transform="rotate(134 81 25)" fill="#b8cf8a"/><ellipse cx="62" cy="38" rx="4.5" ry="1.6" transform="rotate(175 62 38)" fill="#b8cf8a"/><ellipse cx="114" cy="17" rx="4.5" ry="1.6" transform="rotate(74 114 17)" fill="#7fa86a"/><ellipse cx="35" cy="101" rx="4.5" ry="1.6" transform="rotate(131 35 101)" fill="#b8cf8a"/><ellipse cx="89" cy="23" rx="4.5" ry="1.6" transform="rotate(72 89 23)" fill="#5f8c58"/><ellipse cx="4" cy="0" rx="4.5" ry="1.6" transform="rotate(6 4 0)" fill="#96b97a"/><ellipse cx="71" cy="28" rx="4.5" ry="1.6" transform="rotate(35 71 28)" fill="#96b97a"/><ellipse cx="25" cy="50" rx="4.5" ry="1.6" transform="rotate(15 25 50)" fill="#5f8c58"/><ellipse cx="97" cy="45" rx="4.5" ry="1.6" transform="rotate(150 97 45)" fill="#7fa86a"/><ellipse cx="114" cy="84" rx="4.5" ry="1.6" transform="rotate(148 114 84)" fill="#5f8c58"/><ellipse cx="124" cy="68" rx="4.5" ry="1.6" transform="rotate(98 124 68)" fill="#96b97a"/><ellipse cx="2" cy="76" rx="4.5" ry="1.6" transform="rotate(7 2 76)" fill="#7fa86a"/><ellipse cx="114" cy="97" rx="4.5" ry="1.6" transform="rotate(136 114 97)" fill="#96b97a"/><ellipse cx="100" cy="41" rx="4.5" ry="1.6" transform="rotate(25 100 41)" fill="#5f8c58"/><ellipse cx="24" cy="29" rx="4.5" ry="1.6" transform="rotate(176 24 29)" fill="#b8cf8a"/><ellipse cx="79" cy="13" rx="4.5" ry="1.6" transform="rotate(136 79 13)" fill="#b8cf8a"/><ellipse cx="74" cy="8" rx="4.5" ry="1.6" transform="rotate(91 74 8)" fill="#5f8c58"/><ellipse cx="10" cy="36" rx="4.5" ry="1.6" transform="rotate(175 10 36)" fill="#7fa86a"/><ellipse cx="92" cy="33" rx="4.5" ry="1.6" transform="rotate(46 92 33)" fill="#b8cf8a"/><ellipse cx="46" cy="3" rx="4.5" ry="1.6" transform="rotate(124 46 3)" fill="#b8cf8a"/><ellipse cx="62" cy="6" rx="4.5" ry="1.6" transform="rotate(152 62 6)" fill="#5f8c58"/><ellipse cx="58" cy="95" rx="4.5" ry="1.6" transform="rotate(24 58 95)" fill="#96b97a"/><ellipse cx="1" cy="39" rx="4.5" ry="1.6" transform="rotate(71 1 39)" fill="#96b97a"/><ellipse cx="87" cy="32" rx="4.5" ry="1.6" transform="rotate(132 87 32)" fill="#96b97a"/><ellipse cx="64" cy="75" rx="4.5" ry="1.6" transform="rotate(41 64 75)" fill="#b8cf8a"/><ellipse cx="49" cy="54" rx="4.5" ry="1.6" transform="rotate(180 49 54)" fill="#96b97a"/><ellipse cx="58" cy="84" rx="4.5" ry="1.6" transform="rotate(12 58 84)" fill="#96b97a"/><ellipse cx="52" cy="75" rx="4.5" ry="1.6" transform="rotate(101 52 75)" fill="#b8cf8a"/><ellipse cx="84" cy="104" rx="4.5" ry="1.6" transform="rotate(141 84 104)" fill="#5f8c58"/><ellipse cx="44" cy="78" rx="4.5" ry="1.6" transform="rotate(82 44 78)" fill="#b8cf8a"/><ellipse cx="114" cy="68" rx="4.5" ry="1.6" transform="rotate(43 114 68)" fill="#96b97a"/><ellipse cx="61" cy="86" rx="4.5" ry="1.6" transform="rotate(34 61 86)" fill="#5f8c58"/><ellipse cx="63" cy="46" rx="4.5" ry="1.6" transform="rotate(93 63 46)" fill="#5f8c58"/><ellipse cx="52" cy="67" rx="4.5" ry="1.6" transform="rotate(72 52 67)" fill="#b8cf8a"/><ellipse cx="103" cy="84" rx="4.5" ry="1.6" transform="rotate(155 103 84)" fill="#5f8c58"/><ellipse cx="19" cy="28" rx="4.5" ry="1.6" transform="rotate(8 19 28)" fill="#b8cf8a"/><ellipse cx="52" cy="66" rx="4.5" ry="1.6" transform="rotate(67 52 66)" fill="#5f8c58"/><ellipse cx="52" cy="41" rx="4.5" ry="1.6" transform="rotate(98 52 41)" fill="#b8cf8a"/><ellipse cx="103" cy="20" rx="4.5" ry="1.6" transform="rotate(52 103 20)" fill="#5f8c58"/><ellipse cx="14" cy="29" rx="4.5" ry="1.6" transform="rotate(13 14 29)" fill="#5f8c58"/><ellipse cx="124" cy="98" rx="4.5" ry="1.6" transform="rotate(35 124 98)" fill="#5f8c58"/><ellipse cx="106" cy="23" rx="4.5" ry="1.6" transform="rotate(6 106 23)" fill="#5f8c58"/><ellipse cx="5" cy="87" rx="4.5" ry="1.6" transform="rotate(50 5 87)" fill="#96b97a"/><ellipse cx="25" cy="87" rx="4.5" ry="1.6" transform="rotate(48 25 87)" fill="#96b97a"/><ellipse cx="98" cy="58" rx="4.5" ry="1.6" transform="rotate(5 98 58)" fill="#7fa86a"/><ellipse cx="46" cy="53" rx="4.5" ry="1.6" transform="rotate(51 46 53)" fill="#b8cf8a"/><ellipse cx="12" cy="1" rx="4.5" ry="1.6" transform="rotate(32 12 1)" fill="#b8cf8a"/><ellipse cx="64" cy="68" rx="4.5" ry="1.6" transform="rotate(119 64 68)" fill="#5f8c58"/><ellipse cx="81" cy="42" rx="4.5" ry="1.6" transform="rotate(106 81 42)" fill="#7fa86a"/><ellipse cx="91" cy="30" rx="4.5" ry="1.6" transform="rotate(39 91 30)" fill="#b8cf8a"/><ellipse cx="96" cy="39" rx="4.5" ry="1.6" transform="rotate(26 96 39)" fill="#b8cf8a"/><ellipse cx="70" cy="103" rx="4.5" ry="1.6" transform="rotate(95 70 103)" fill="#7fa86a"/><ellipse cx="107" cy="14" rx="4.5" ry="1.6" transform="rotate(15 107 14)" fill="#96b97a"/><ellipse cx="14" cy="9" rx="4.5" ry="1.6" transform="rotate(14 14 9)" fill="#7fa86a"/><ellipse cx="118" cy="3" rx="4.5" ry="1.6" transform="rotate(175 118 3)" fill="#7fa86a"/><ellipse cx="75" cy="63" rx="4.5" ry="1.6" transform="rotate(121 75 63)" fill="#96b97a"/><ellipse cx="59" cy="36" rx="4.5" ry="1.6" transform="rotate(166 59 36)" fill="#5f8c58"/><ellipse cx="102" cy="42" rx="4.5" ry="1.6" transform="rotate(167 102 42)" fill="#5f8c58"/><ellipse cx="121" cy="106" rx="4.5" ry="1.6" transform="rotate(175 121 106)" fill="#5f8c58"/><ellipse cx="18" cy="13" rx="4.5" ry="1.6" transform="rotate(124 18 13)" fill="#96b97a"/><ellipse cx="85" cy="1" rx="4.5" ry="1.6" transform="rotate(58 85 1)" fill="#7fa86a"/><ellipse cx="61" cy="78" rx="4.5" ry="1.6" transform="rotate(103 61 78)" fill="#5f8c58"/><ellipse cx="43" cy="41" rx="4.5" ry="1.6" transform="rotate(124 43 41)" fill="#5f8c58"/><ellipse cx="25" cy="67" rx="4.5" ry="1.6" transform="rotate(137 25 67)" fill="#5f8c58"/><ellipse cx="8" cy="37" rx="4.5" ry="1.6" transform="rotate(68 8 37)" fill="#96b97a"/><ellipse cx="106" cy="71" rx="4.5" ry="1.6" transform="rotate(112 106 71)" fill="#5f8c58"/><ellipse cx="32" cy="45" rx="4.5" ry="1.6" transform="rotate(26 32 45)" fill="#7fa86a"/><ellipse cx="94" cy="68" rx="4.5" ry="1.6" transform="rotate(44 94 68)" fill="#5f8c58"/><ellipse cx="70" cy="64" rx="4.5" ry="1.6" transform="rotate(147 70 64)" fill="#5f8c58"/><ellipse cx="48" cy="33" rx="4.5" ry="1.6" transform="rotate(90 48 33)" fill="#5f8c58"/><ellipse cx="120" cy="64" rx="4.5" ry="1.6" transform="rotate(18 120 64)" fill="#96b97a"/><ellipse cx="79" cy="95" rx="4.5" ry="1.6" transform="rotate(82 79 95)" fill="#5f8c58"/><ellipse cx="78" cy="92" rx="4.5" ry="1.6" transform="rotate(36 78 92)" fill="#5f8c58"/><ellipse cx="43" cy="106" rx="4.5" ry="1.6" transform="rotate(164 43 106)" fill="#b8cf8a"/><ellipse cx="5" cy="35" rx="4.5" ry="1.6" transform="rotate(137 5 35)" fill="#7fa86a"/><ellipse cx="106" cy="56" rx="4.5" ry="1.6" transform="rotate(64 106 56)" fill="#96b97a"/><ellipse cx="103" cy="106" rx="4.5" ry="1.6" transform="rotate(172 103 106)" fill="#5f8c58"/><ellipse cx="22" cy="47" rx="4.5" ry="1.6" transform="rotate(72 22 47)" fill="#7fa86a"/><ellipse cx="107" cy="25" rx="4.5" ry="1.6" transform="rotate(50 107 25)" fill="#5f8c58"/><circle cx="5" cy="8" r="6.0" fill="#a6aee6"/><circle cx="1.2" cy="3.5" r="2.4" fill="#b7bdf0"/><circle cx="4.8" cy="3.9" r="1.8" fill="#b7bdf0"/><circle cx="1.1" cy="11.2" r="2.1" fill="#a6aee6"/><circle cx="5.4" cy="13.3" r="2.6" fill="#6e74c8"/><circle cx="2.5" cy="11.2" r="1.6" fill="#6e74c8"/><circle cx="-0.6" cy="12.6" r="2.9" fill="#a6aee6"/><circle cx="3.0" cy="3.1" r="2.4" fill="#a6aee6"/><circle cx="4.7" cy="12.7" r="1.7" fill="#8c94dc"/><circle cx="-0.1" cy="9.6" r="1.9" fill="#a6aee6"/><circle cx="9.8" cy="12.6" r="2.1" fill="#b7bdf0"/><circle cx="4.2" cy="10.1" r="1.9" fill="#a6aee6"/><circle cx="1.1" cy="11.7" r="2.0" fill="#6e74c8"/><circle cx="5.6" cy="5.5" r="1.9" fill="#8c94dc"/><circle cx="6.0" cy="4.4" r="2.3" fill="#b7bdf0"/><circle cx="9.5" cy="11.6" r="1.9" fill="#8c94dc"/><circle cx="4.0" cy="8.4" r="2.3" fill="#6e74c8"/><circle cx="6.2" cy="6.2" r="2.4" fill="#b7bdf0"/><circle cx="-1.2" cy="5.5" r="2.9" fill="#b7bdf0"/><circle cx="-1.5" cy="6.2" r="2.1" fill="#a6aee6"/><circle cx="11.5" cy="9.0" r="2.3" fill="#6e74c8"/><circle cx="8.4" cy="7.8" r="2.2" fill="#b7bdf0"/><circle cx="-1.4" cy="7.0" r="2.5" fill="#6e74c8"/><circle cx="2.4" cy="4.4" r="2.0" fill="#8c94dc"/><circle cx="1.2" cy="2.5" r="1.8" fill="#a6aee6"/><circle cx="7.6" cy="9.1" r="2.7" fill="#a6aee6"/><circle cx="8.0" cy="14.0" r="2.8" fill="#a6aee6"/><circle cx="5.5" cy="7.1" r="1.8" fill="#b7bdf0"/><circle cx="-0.6" cy="5.4" r="2.7" fill="#6e74c8"/><circle cx="5.0" cy="4.1" r="2.7" fill="#b7bdf0"/><circle cx="7.0" cy="14.9" r="2.9" fill="#6e74c8"/><circle cx="3.6" cy="9.8" r="2.3" fill="#b7bdf0"/><circle cx="4.1" cy="9.2" r="2.0" fill="#8c94dc"/><circle cx="2.9" cy="14.5" r="2.0" fill="#8c94dc"/><circle cx="8.1" cy="6.2" r="2.4" fill="#a6aee6"/><circle cx="6.6" cy="6.6" r="2.9" fill="#a6aee6"/><circle cx="4.7" cy="0.7" r="3.0" fill="#6e74c8"/><circle cx="11.5" cy="7.9" r="2.2" fill="#6e74c8"/><circle cx="4.3" cy="9.5" r="2.9" fill="#6e74c8"/><circle cx="2.3" cy="3.7" r="1.9" fill="#a6aee6"/><circle cx="0.2" cy="3.4" r="2.5" fill="#b7bdf0"/><circle cx="10.6" cy="3.7" r="2.3" fill="#b7bdf0"/><circle cx="0.5" cy="7.0" r="2.1" fill="#a6aee6"/><circle cx="8.4" cy="3.0" r="2.4" fill="#a6aee6"/><circle cx="-1.1" cy="6.8" r="3.0" fill="#8c94dc"/><circle cx="6.4" cy="12.5" r="1.8" fill="#8c94dc"/><circle cx="1.6" cy="14.4" r="2.6" fill="#8c94dc"/><circle cx="0.8" cy="9.9" r="1.9" fill="#a6aee6"/><circle cx="3.4" cy="5.7" r="2.4" fill="#a6aee6"/><circle cx="4.0" cy="2.3" r="2.5" fill="#8c94dc"/><circle cx="5.7" cy="14.2" r="2.3" fill="#a6aee6"/><circle cx="6.2" cy="9.8" r="2.9" fill="#a6aee6"/><circle cx="9.3" cy="13.8" r="2.3" fill="#a6aee6"/><circle cx="9.1" cy="4.7" r="2.4" fill="#6e74c8"/><circle cx="5.0" cy="12.6" r="2.4" fill="#8c94dc"/><circle cx="3.7" cy="8.7" r="2.8" fill="#a6aee6"/><circle cx="10.7" cy="6.7" r="2.7" fill="#a6aee6"/><circle cx="2.2" cy="2.7" r="1.6" fill="#8c94dc"/><circle cx="4.7" cy="5.3" r="2.0" fill="#a6aee6"/><circle cx="10.0" cy="11.1" r="2.6" fill="#8c94dc"/><circle cx="-1.5" cy="7.6" r="1.7" fill="#a6aee6"/><circle cx="45" cy="17" r="9.3" fill="#a6aee6"/><circle cx="46.6" cy="16.1" r="2.1" fill="#8c94dc"/><circle cx="46.9" cy="19.7" r="2.0" fill="#6e74c8"/><circle cx="44.2" cy="26.8" r="1.8" fill="#a6aee6"/><circle cx="35.5" cy="20.9" r="1.7" fill="#b7bdf0"/><circle cx="49.5" cy="7.8" r="2.1" fill="#6e74c8"/><circle cx="54.9" cy="11.0" r="1.7" fill="#6e74c8"/><circle cx="45.8" cy="23.5" r="2.9" fill="#b7bdf0"/><circle cx="44.3" cy="17.1" r="1.7" fill="#8c94dc"/><circle cx="49.2" cy="23.4" r="2.3" fill="#b7bdf0"/><circle cx="52.6" cy="10.3" r="2.1" fill="#8c94dc"/><circle cx="54.1" cy="23.0" r="1.8" fill="#b7bdf0"/><circle cx="50.7" cy="27.0" r="2.8" fill="#b7bdf0"/><circle cx="42.6" cy="22.8" r="2.6" fill="#8c94dc"/><circle cx="50.1" cy="17.1" r="2.3" fill="#6e74c8"/><circle cx="45.4" cy="5.6" r="2.9" fill="#8c94dc"/><circle cx="42.2" cy="18.7" r="2.1" fill="#b7bdf0"/><circle cx="52.8" cy="17.3" r="2.1" fill="#6e74c8"/><circle cx="44.1" cy="18.4" r="2.1" fill="#a6aee6"/><circle cx="44.7" cy="19.8" r="1.8" fill="#8c94dc"/><circle cx="44.6" cy="11.5" r="1.8" fill="#a6aee6"/><circle cx="52.0" cy="17.9" r="2.8" fill="#6e74c8"/><circle cx="47.8" cy="28.0" r="2.5" fill="#8c94dc"/><circle cx="51.2" cy="7.8" r="2.4" fill="#b7bdf0"/><circle cx="48.6" cy="25.4" r="2.6" fill="#6e74c8"/><circle cx="40.5" cy="19.2" r="1.8" fill="#b7bdf0"/><circle cx="45.3" cy="5.9" r="1.6" fill="#8c94dc"/><circle cx="54.4" cy="20.1" r="2.7" fill="#8c94dc"/><circle cx="49.5" cy="15.6" r="2.2" fill="#b7bdf0"/><circle cx="49.3" cy="12.0" r="1.8" fill="#b7bdf0"/><circle cx="54.4" cy="16.0" r="3.0" fill="#8c94dc"/><circle cx="35.9" cy="18.6" r="2.2" fill="#6e74c8"/><circle cx="40.2" cy="10.6" r="2.8" fill="#a6aee6"/><circle cx="38.0" cy="14.9" r="2.5" fill="#8c94dc"/><circle cx="54.4" cy="13.2" r="2.1" fill="#a6aee6"/><circle cx="47.3" cy="11.3" r="2.4" fill="#8c94dc"/><circle cx="47.8" cy="27.1" r="2.8" fill="#8c94dc"/><circle cx="49.1" cy="24.6" r="2.8" fill="#b7bdf0"/><circle cx="52.9" cy="8.7" r="2.6" fill="#b7bdf0"/><circle cx="50.7" cy="26.4" r="2.8" fill="#b7bdf0"/><circle cx="43.0" cy="21.4" r="2.2" fill="#a6aee6"/><circle cx="56.0" cy="18.5" r="1.7" fill="#a6aee6"/><circle cx="46.4" cy="11.3" r="2.6" fill="#6e74c8"/><circle cx="36.3" cy="19.7" r="2.2" fill="#8c94dc"/><circle cx="44.7" cy="16.2" r="2.5" fill="#8c94dc"/><circle cx="36.7" cy="15.1" r="1.8" fill="#a6aee6"/><circle cx="34.2" cy="14.8" r="1.6" fill="#8c94dc"/><circle cx="38.0" cy="20.2" r="2.9" fill="#b7bdf0"/><circle cx="51.2" cy="7.7" r="1.7" fill="#6e74c8"/><circle cx="55.5" cy="21.1" r="1.7" fill="#6e74c8"/><circle cx="41.4" cy="20.5" r="2.1" fill="#6e74c8"/><circle cx="45.4" cy="28.1" r="1.9" fill="#b7bdf0"/><circle cx="36.4" cy="10.5" r="3.0" fill="#a6aee6"/><circle cx="45.8" cy="7.9" r="2.4" fill="#8c94dc"/><circle cx="45.7" cy="12.6" r="2.7" fill="#b7bdf0"/><circle cx="39.4" cy="23.0" r="2.4" fill="#b7bdf0"/><circle cx="39.1" cy="12.2" r="2.6" fill="#a6aee6"/><circle cx="44.2" cy="25.0" r="1.8" fill="#6e74c8"/><circle cx="43.8" cy="22.1" r="2.6" fill="#b7bdf0"/><circle cx="37.2" cy="10.1" r="1.7" fill="#b7bdf0"/><circle cx="50.1" cy="10.5" r="2.5" fill="#6e74c8"/><circle cx="24" cy="37" r="9.3" fill="#dba6e0"/><circle cx="24.3" cy="39.4" r="2.5" fill="#e6c0ea"/><circle cx="24.4" cy="28.0" r="1.7" fill="#a86cc0"/><circle cx="32.1" cy="42.9" r="1.8" fill="#e6c0ea"/><circle cx="28.5" cy="46.4" r="2.1" fill="#c58cd4"/><circle cx="27.7" cy="36.5" r="2.2" fill="#a86cc0"/><circle cx="25.2" cy="26.0" r="1.9" fill="#e6c0ea"/><circle cx="30.2" cy="29.5" r="2.0" fill="#dba6e0"/><circle cx="22.8" cy="41.1" r="2.8" fill="#e6c0ea"/><circle cx="28.1" cy="28.8" r="2.8" fill="#dba6e0"/><circle cx="33.2" cy="41.0" r="1.7" fill="#dba6e0"/><circle cx="23.7" cy="26.9" r="2.4" fill="#c58cd4"/><circle cx="19.8" cy="47.3" r="2.6" fill="#c58cd4"/><circle cx="23.1" cy="45.0" r="2.5" fill="#dba6e0"/><circle cx="20.7" cy="43.7" r="2.9" fill="#e6c0ea"/><circle cx="28.4" cy="45.4" r="2.8" fill="#dba6e0"/><circle cx="23.4" cy="43.2" r="2.8" fill="#a86cc0"/><circle cx="18.0" cy="37.2" r="2.8" fill="#dba6e0"/><circle cx="18.5" cy="36.4" r="2.4" fill="#a86cc0"/><circle cx="32.8" cy="37.6" r="2.7" fill="#c58cd4"/><circle cx="12.8" cy="39.9" r="1.8" fill="#e6c0ea"/><circle cx="23.6" cy="28.1" r="2.7" fill="#c58cd4"/><circle cx="20.5" cy="46.8" r="2.7" fill="#e6c0ea"/><circle cx="22.7" cy="29.8" r="2.3" fill="#a86cc0"/><circle cx="20.5" cy="44.0" r="2.0" fill="#a86cc0"/><circle cx="17.7" cy="31.5" r="2.3" fill="#dba6e0"/><circle cx="18.5" cy="34.2" r="1.6" fill="#dba6e0"/><circle cx="16.6" cy="41.2" r="2.9" fill="#dba6e0"/><circle cx="29.9" cy="44.5" r="2.6" fill="#c58cd4"/><circle cx="16.4" cy="36.6" r="1.8" fill="#a86cc0"/><circle cx="22.7" cy="31.1" r="2.2" fill="#c58cd4"/><circle cx="34.0" cy="34.1" r="2.8" fill="#e6c0ea"/><circle cx="20.5" cy="29.6" r="2.6" fill="#dba6e0"/><circle cx="27.8" cy="31.0" r="2.0" fill="#e6c0ea"/><circle cx="18.1" cy="44.7" r="2.3" fill="#a86cc0"/><circle cx="19.7" cy="35.3" r="2.8" fill="#e6c0ea"/><circle cx="21.9" cy="37.3" r="2.3" fill="#e6c0ea"/><circle cx="16.5" cy="37.2" r="2.5" fill="#dba6e0"/><circle cx="30.6" cy="28.0" r="2.6" fill="#e6c0ea"/><circle cx="20.6" cy="47.6" r="2.8" fill="#e6c0ea"/><circle cx="23.3" cy="31.1" r="2.5" fill="#c58cd4"/><circle cx="33.7" cy="34.3" r="2.6" fill="#e6c0ea"/><circle cx="22.9" cy="38.7" r="2.9" fill="#dba6e0"/><circle cx="29.2" cy="39.8" r="1.8" fill="#dba6e0"/><circle cx="31.8" cy="31.7" r="1.7" fill="#e6c0ea"/><circle cx="31.2" cy="29.5" r="2.9" fill="#a86cc0"/><circle cx="19.9" cy="27.8" r="1.6" fill="#c58cd4"/><circle cx="27.0" cy="30.7" r="1.9" fill="#c58cd4"/><circle cx="19.6" cy="44.0" r="2.0" fill="#c58cd4"/><circle cx="33.8" cy="34.1" r="2.2" fill="#e6c0ea"/><circle cx="31.8" cy="38.0" r="2.9" fill="#a86cc0"/><circle cx="15.5" cy="44.7" r="2.3" fill="#a86cc0"/><circle cx="26.8" cy="30.3" r="2.9" fill="#dba6e0"/><circle cx="29.8" cy="33.2" r="2.1" fill="#dba6e0"/><circle cx="22.8" cy="36.5" r="2.4" fill="#c58cd4"/><circle cx="23.6" cy="43.3" r="1.8" fill="#a86cc0"/><circle cx="27.6" cy="42.5" r="2.7" fill="#c58cd4"/><circle cx="31.7" cy="45.5" r="1.6" fill="#e6c0ea"/><circle cx="17.7" cy="44.1" r="2.4" fill="#a86cc0"/><circle cx="26.9" cy="34.9" r="2.3" fill="#a86cc0"/><circle cx="22.5" cy="28.8" r="2.5" fill="#c58cd4"/><circle cx="45" cy="47" r="10.2" fill="#e9df6a"/><circle cx="36.8" cy="46.9" r="2.4" fill="#e9df6a"/><circle cx="51.7" cy="44.4" r="1.7" fill="#8c94dc"/><circle cx="36.9" cy="45.4" r="2.7" fill="#8c94dc"/><circle cx="54.4" cy="47.6" r="2.5" fill="#a6aee6"/><circle cx="42.6" cy="53.0" r="2.6" fill="#8c94dc"/><circle cx="42.3" cy="56.9" r="2.4" fill="#a6aee6"/><circle cx="37.3" cy="44.4" r="2.2" fill="#a6aee6"/><circle cx="42.6" cy="43.8" r="1.7" fill="#7a4f8a"/><circle cx="53.2" cy="53.6" r="1.6" fill="#7a4f8a"/><circle cx="50.7" cy="37.3" r="1.7" fill="#7a4f8a"/><circle cx="45.1" cy="46.3" r="2.4" fill="#e9df6a"/><circle cx="43.4" cy="49.8" r="2.9" fill="#e9df6a"/><circle cx="40.0" cy="47.8" r="3.0" fill="#a6aee6"/><circle cx="33.2" cy="48.8" r="2.6" fill="#e9df6a"/><circle cx="36.3" cy="50.8" r="2.8" fill="#8c94dc"/><circle cx="45.8" cy="54.5" r="2.6" fill="#8c94dc"/><circle cx="41.5" cy="56.4" r="1.9" fill="#8c94dc"/><circle cx="44.5" cy="54.6" r="2.2" fill="#8c94dc"/><circle cx="47.9" cy="53.2" r="2.6" fill="#e9df6a"/><circle cx="34.7" cy="43.3" r="2.3" fill="#a6aee6"/><circle cx="43.1" cy="42.6" r="1.9" fill="#a6aee6"/><circle cx="46.2" cy="53.1" r="1.7" fill="#8c94dc"/><circle cx="56.4" cy="49.7" r="1.8" fill="#7a4f8a"/><circle cx="53.6" cy="46.0" r="2.4" fill="#7a4f8a"/><circle cx="33.7" cy="46.8" r="2.8" fill="#a6aee6"/><circle cx="45.8" cy="58.1" r="1.7" fill="#e9df6a"/><circle cx="49.8" cy="44.5" r="2.4" fill="#a6aee6"/><circle cx="44.6" cy="47.7" r="1.8" fill="#8c94dc"/><circle cx="33.3" cy="47.3" r="2.2" fill="#a6aee6"/><circle cx="46.9" cy="42.7" r="2.4" fill="#7a4f8a"/><circle cx="48.9" cy="55.8" r="3.0" fill="#a6aee6"/><circle cx="43.5" cy="50.8" r="3.0" fill="#a6aee6"/><circle cx="38.3" cy="40.4" r="2.1" fill="#8c94dc"/><circle cx="33.6" cy="45.9" r="2.6" fill="#a6aee6"/><circle cx="42.2" cy="35.4" r="2.0" fill="#a6aee6"/><circle cx="51.7" cy="36.7" r="2.5" fill="#e9df6a"/><circle cx="57.2" cy="46.3" r="2.2" fill="#8c94dc"/><circle cx="50.8" cy="54.6" r="2.2" fill="#e9df6a"/><circle cx="54.1" cy="43.9" r="2.8" fill="#7a4f8a"/><circle cx="33.8" cy="50.3" r="2.3" fill="#8c94dc"/><circle cx="41.3" cy="55.6" r="1.8" fill="#a6aee6"/><circle cx="48.2" cy="57.6" r="2.2" fill="#7a4f8a"/><circle cx="48.5" cy="53.0" r="1.7" fill="#a6aee6"/><circle cx="44.8" cy="46.7" r="1.8" fill="#a6aee6"/><circle cx="36.3" cy="44.4" r="1.8" fill="#7a4f8a"/><circle cx="48.2" cy="40.8" r="2.0" fill="#8c94dc"/><circle cx="38.3" cy="46.8" r="1.9" fill="#e9df6a"/><circle cx="48.9" cy="47.2" r="1.9" fill="#e9df6a"/><circle cx="56.4" cy="44.4" r="2.3" fill="#a6aee6"/><circle cx="51.2" cy="55.3" r="1.7" fill="#7a4f8a"/><circle cx="41.2" cy="35.4" r="2.3" fill="#a6aee6"/><circle cx="41.4" cy="44.4" r="3.0" fill="#7a4f8a"/><circle cx="45.6" cy="41.9" r="1.8" fill="#e9df6a"/><circle cx="45.2" cy="51.5" r="1.7" fill="#7a4f8a"/><circle cx="48.1" cy="55.7" r="2.1" fill="#8c94dc"/><circle cx="49.8" cy="58.2" r="3.0" fill="#a6aee6"/><circle cx="47.9" cy="56.7" r="2.8" fill="#e9df6a"/><circle cx="38.2" cy="55.8" r="2.2" fill="#a6aee6"/><circle cx="55.6" cy="44.0" r="1.8" fill="#8c94dc"/><circle cx="46.5" cy="55.2" r="2.7" fill="#a6aee6"/><circle cx="75" cy="22" r="9.3" fill="#a6aee6"/><circle cx="82.7" cy="26.8" r="2.5" fill="#8c94dc"/><circle cx="70.5" cy="30.9" r="2.6" fill="#b7bdf0"/><circle cx="83.8" cy="25.9" r="2.1" fill="#a6aee6"/><circle cx="79.9" cy="25.2" r="2.1" fill="#8c94dc"/><circle cx="73.6" cy="25.6" r="2.0" fill="#6e74c8"/><circle cx="74.9" cy="17.5" r="2.0" fill="#a6aee6"/><circle cx="65.2" cy="20.5" r="2.2" fill="#b7bdf0"/><circle cx="78.9" cy="30.1" r="1.6" fill="#a6aee6"/><circle cx="73.8" cy="16.8" r="2.5" fill="#6e74c8"/><circle cx="64.4" cy="20.3" r="2.9" fill="#8c94dc"/><circle cx="79.0" cy="29.9" r="2.4" fill="#b7bdf0"/><circle cx="84.7" cy="27.7" r="2.9" fill="#8c94dc"/><circle cx="68.0" cy="21.5" r="2.1" fill="#6e74c8"/><circle cx="80.2" cy="17.0" r="2.9" fill="#a6aee6"/><circle cx="84.4" cy="21.6" r="2.1" fill="#a6aee6"/><circle cx="83.8" cy="16.4" r="2.3" fill="#a6aee6"/><circle cx="71.2" cy="25.1" r="2.5" fill="#a6aee6"/><circle cx="76.8" cy="12.5" r="2.6" fill="#a6aee6"/><circle cx="82.5" cy="25.6" r="2.5" fill="#8c94dc"/><circle cx="85.4" cy="18.8" r="3.0" fill="#8c94dc"/><circle cx="71.9" cy="26.2" r="2.6" fill="#a6aee6"/><circle cx="80.6" cy="25.6" r="2.8" fill="#8c94dc"/><circle cx="71.4" cy="18.7" r="1.9" fill="#8c94dc"/><circle cx="66.0" cy="25.6" r="1.9" fill="#b7bdf0"/><circle cx="78.8" cy="17.1" r="2.8" fill="#a6aee6"/><circle cx="73.6" cy="26.3" r="2.4" fill="#6e74c8"/><circle cx="79.6" cy="24.2" r="2.3" fill="#6e74c8"/><circle cx="79.3" cy="11.8" r="1.9" fill="#a6aee6"/><circle cx="66.6" cy="26.2" r="2.6" fill="#6e74c8"/><circle cx="65.2" cy="21.3" r="2.0" fill="#6e74c8"/><circle cx="73.5" cy="11.3" r="2.5" fill="#8c94dc"/><circle cx="80.0" cy="15.9" r="2.1" fill="#a6aee6"/><circle cx="74.4" cy="16.0" r="2.6" fill="#a6aee6"/><circle cx="72.7" cy="20.8" r="2.1" fill="#b7bdf0"/><circle cx="74.7" cy="30.6" r="2.2" fill="#a6aee6"/><circle cx="69.0" cy="27.7" r="2.3" fill="#a6aee6"/><circle cx="73.9" cy="18.4" r="2.3" fill="#b7bdf0"/><circle cx="84.9" cy="27.3" r="1.6" fill="#6e74c8"/><circle cx="74.2" cy="30.6" r="2.6" fill="#8c94dc"/><circle cx="77.8" cy="32.1" r="2.9" fill="#8c94dc"/><circle cx="68.5" cy="22.6" r="2.3" fill="#6e74c8"/><circle cx="70.1" cy="11.9" r="2.5" fill="#6e74c8"/><circle cx="80.1" cy="27.3" r="2.6" fill="#b7bdf0"/><circle cx="71.3" cy="26.0" r="2.8" fill="#a6aee6"/><circle cx="74.0" cy="13.6" r="2.8" fill="#a6aee6"/><circle cx="71.9" cy="26.1" r="2.2" fill="#b7bdf0"/><circle cx="74.0" cy="10.8" r="1.8" fill="#a6aee6"/><circle cx="68.0" cy="30.0" r="1.9" fill="#a6aee6"/><circle cx="78.6" cy="30.6" r="2.6" fill="#a6aee6"/><circle cx="74.9" cy="18.1" r="1.8" fill="#b7bdf0"/><circle cx="74.9" cy="25.6" r="2.1" fill="#a6aee6"/><circle cx="85.1" cy="17.3" r="2.0" fill="#a6aee6"/><circle cx="77.1" cy="27.7" r="2.9" fill="#8c94dc"/><circle cx="76.5" cy="10.8" r="2.1" fill="#8c94dc"/><circle cx="74.0" cy="19.3" r="2.6" fill="#b7bdf0"/><circle cx="66.3" cy="25.3" r="2.6" fill="#b7bdf0"/><circle cx="76.8" cy="13.6" r="2.8" fill="#8c94dc"/><circle cx="84.0" cy="23.1" r="2.6" fill="#b7bdf0"/><circle cx="73.6" cy="24.7" r="2.8" fill="#b7bdf0"/><circle cx="65.1" cy="20.0" r="2.2" fill="#8c94dc"/><circle cx="83" cy="43" r="10.2" fill="#dba6e0"/><circle cx="81.2" cy="52.2" r="2.3" fill="#a86cc0"/><circle cx="92.1" cy="49.6" r="2.8" fill="#dba6e0"/><circle cx="87.1" cy="43.6" r="2.5" fill="#dba6e0"/><circle cx="76.3" cy="33.0" r="2.8" fill="#c58cd4"/><circle cx="84.9" cy="31.3" r="1.9" fill="#a86cc0"/><circle cx="90.0" cy="34.5" r="1.7" fill="#c58cd4"/><circle cx="76.8" cy="42.9" r="2.5" fill="#e6c0ea"/><circle cx="93.8" cy="44.0" r="1.7" fill="#dba6e0"/><circle cx="78.5" cy="45.1" r="2.2" fill="#dba6e0"/><circle cx="79.9" cy="44.3" r="1.9" fill="#dba6e0"/><circle cx="87.7" cy="43.6" r="1.7" fill="#a86cc0"/><circle cx="75.6" cy="48.7" r="2.9" fill="#e6c0ea"/><circle cx="91.7" cy="42.1" r="1.9" fill="#e6c0ea"/><circle cx="78.6" cy="40.5" r="1.8" fill="#dba6e0"/><circle cx="85.1" cy="40.4" r="2.0" fill="#e6c0ea"/><circle cx="86.7" cy="44.8" r="2.7" fill="#c58cd4"/><circle cx="89.9" cy="40.8" r="1.8" fill="#dba6e0"/><circle cx="77.2" cy="47.2" r="2.9" fill="#a86cc0"/><circle cx="91.3" cy="40.2" r="1.7" fill="#c58cd4"/><circle cx="90.0" cy="36.5" r="2.3" fill="#a86cc0"/><circle cx="81.9" cy="44.4" r="2.9" fill="#e6c0ea"/><circle cx="87.4" cy="47.4" r="2.9" fill="#e6c0ea"/><circle cx="84.7" cy="37.3" r="2.8" fill="#c58cd4"/><circle cx="90.1" cy="50.8" r="1.9" fill="#a86cc0"/><circle cx="74.7" cy="40.3" r="2.0" fill="#e6c0ea"/><circle cx="93.4" cy="37.8" r="2.4" fill="#e6c0ea"/><circle cx="80.1" cy="44.7" r="1.9" fill="#a86cc0"/><circle cx="80.1" cy="49.1" r="3.0" fill="#a86cc0"/><circle cx="72.3" cy="49.0" r="2.6" fill="#dba6e0"/><circle cx="85.4" cy="36.9" r="2.6" fill="#a86cc0"/><circle cx="80.4" cy="38.6" r="2.7" fill="#c58cd4"/><circle cx="88.3" cy="52.4" r="2.5" fill="#dba6e0"/><circle cx="89.3" cy="34.9" r="2.9" fill="#dba6e0"/><circle cx="85.5" cy="38.9" r="2.0" fill="#e6c0ea"/><circle cx="79.2" cy="42.9" r="2.1" fill="#dba6e0"/><circle cx="94.1" cy="37.1" r="1.7" fill="#a86cc0"/><circle cx="88.9" cy="44.3" r="2.9" fill="#dba6e0"/><circle cx="81.5" cy="43.1" r="2.0" fill="#a86cc0"/><circle cx="89.1" cy="34.9" r="2.6" fill="#e6c0ea"/><circle cx="81.9" cy="44.4" r="2.6" fill="#c58cd4"/><circle cx="84.7" cy="44.8" r="2.8" fill="#dba6e0"/><circle cx="73.1" cy="50.0" r="1.9" fill="#c58cd4"/><circle cx="79.1" cy="33.5" r="2.3" fill="#c58cd4"/><circle cx="91.5" cy="41.3" r="2.8" fill="#c58cd4"/><circle cx="80.5" cy="39.0" r="2.3" fill="#a86cc0"/><circle cx="75.7" cy="41.0" r="2.1" fill="#dba6e0"/><circle cx="91.7" cy="37.4" r="2.3" fill="#e6c0ea"/><circle cx="81.6" cy="50.6" r="2.0" fill="#dba6e0"/><circle cx="86.7" cy="44.1" r="3.0" fill="#e6c0ea"/><circle cx="80.9" cy="37.8" r="2.3" fill="#c58cd4"/><circle cx="79.9" cy="54.1" r="1.7" fill="#a86cc0"/><circle cx="94.1" cy="39.7" r="2.0" fill="#c58cd4"/><circle cx="83.7" cy="37.2" r="2.4" fill="#a86cc0"/><circle cx="88.8" cy="46.7" r="2.6" fill="#a86cc0"/><circle cx="85.0" cy="42.3" r="2.1" fill="#dba6e0"/><circle cx="94.9" cy="46.9" r="1.9" fill="#dba6e0"/><circle cx="84.5" cy="41.5" r="2.9" fill="#dba6e0"/><circle cx="88.3" cy="38.2" r="1.6" fill="#a86cc0"/><circle cx="84.5" cy="37.2" r="2.2" fill="#a86cc0"/><circle cx="75.4" cy="37.0" r="2.2" fill="#dba6e0"/><circle cx="68" cy="57" r="8.5" fill="#a6aee6"/><circle cx="58.3" cy="56.8" r="2.2" fill="#6e74c8"/><circle cx="72.8" cy="51.4" r="1.7" fill="#8c94dc"/><circle cx="71.2" cy="60.0" r="2.0" fill="#a6aee6"/><circle cx="61.8" cy="49.7" r="2.0" fill="#8c94dc"/><circle cx="63.2" cy="59.5" r="1.8" fill="#b7bdf0"/><circle cx="63.3" cy="56.0" r="2.4" fill="#a6aee6"/><circle cx="67.1" cy="51.7" r="1.7" fill="#6e74c8"/><circle cx="67.7" cy="65.5" r="2.7" fill="#a6aee6"/><circle cx="75.3" cy="60.1" r="2.4" fill="#b7bdf0"/><circle cx="68.3" cy="54.5" r="1.8" fill="#b7bdf0"/><circle cx="69.1" cy="47.5" r="2.9" fill="#b7bdf0"/><circle cx="67.1" cy="55.4" r="2.1" fill="#6e74c8"/><circle cx="66.1" cy="50.5" r="2.1" fill="#6e74c8"/><circle cx="65.0" cy="58.6" r="2.1" fill="#6e74c8"/><circle cx="68.0" cy="60.5" r="1.6" fill="#6e74c8"/><circle cx="70.5" cy="50.9" r="2.7" fill="#a6aee6"/><circle cx="69.2" cy="63.4" r="2.1" fill="#6e74c8"/><circle cx="73.1" cy="51.6" r="2.8" fill="#6e74c8"/><circle cx="68.2" cy="50.9" r="2.2" fill="#6e74c8"/><circle cx="73.1" cy="64.5" r="1.7" fill="#a6aee6"/><circle cx="74.5" cy="63.1" r="2.8" fill="#8c94dc"/><circle cx="71.6" cy="60.9" r="2.0" fill="#8c94dc"/><circle cx="58.7" cy="60.7" r="2.6" fill="#a6aee6"/><circle cx="66.9" cy="48.2" r="2.3" fill="#a6aee6"/><circle cx="67.8" cy="51.2" r="2.3" fill="#a6aee6"/><circle cx="72.9" cy="48.4" r="2.8" fill="#a6aee6"/><circle cx="65.6" cy="54.2" r="2.1" fill="#8c94dc"/><circle cx="75.9" cy="56.2" r="2.0" fill="#b7bdf0"/><circle cx="64.5" cy="64.4" r="2.6" fill="#6e74c8"/><circle cx="62.3" cy="53.5" r="1.8" fill="#8c94dc"/><circle cx="71.0" cy="48.4" r="2.0" fill="#a6aee6"/><circle cx="69.5" cy="59.0" r="2.1" fill="#8c94dc"/><circle cx="74.5" cy="52.3" r="2.4" fill="#6e74c8"/><circle cx="66.6" cy="62.5" r="1.8" fill="#6e74c8"/><circle cx="73.4" cy="52.3" r="2.0" fill="#a6aee6"/><circle cx="65.0" cy="55.3" r="2.0" fill="#6e74c8"/><circle cx="58.4" cy="58.6" r="1.9" fill="#a6aee6"/><circle cx="66.2" cy="65.5" r="2.6" fill="#a6aee6"/><circle cx="62.1" cy="49.3" r="2.4" fill="#a6aee6"/><circle cx="68.0" cy="64.6" r="1.9" fill="#b7bdf0"/><circle cx="58.5" cy="60.3" r="2.4" fill="#a6aee6"/><circle cx="76.2" cy="63.4" r="2.7" fill="#6e74c8"/><circle cx="72.8" cy="59.5" r="2.9" fill="#b7bdf0"/><circle cx="67.3" cy="59.9" r="1.8" fill="#6e74c8"/><circle cx="72.3" cy="57.7" r="1.8" fill="#6e74c8"/><circle cx="69.9" cy="63.3" r="1.8" fill="#b7bdf0"/><circle cx="59.3" cy="52.6" r="2.1" fill="#6e74c8"/><circle cx="61.0" cy="52.6" r="2.3" fill="#6e74c8"/><circle cx="69.2" cy="58.8" r="2.4" fill="#a6aee6"/><circle cx="59.3" cy="59.1" r="2.8" fill="#8c94dc"/><circle cx="68.3" cy="51.3" r="1.9" fill="#a6aee6"/><circle cx="61.0" cy="64.1" r="2.4" fill="#8c94dc"/><circle cx="61.9" cy="56.3" r="2.5" fill="#b7bdf0"/><circle cx="70.8" cy="54.9" r="2.3" fill="#8c94dc"/><circle cx="71.5" cy="56.9" r="2.8" fill="#8c94dc"/><circle cx="67.7" cy="61.5" r="2.7" fill="#8c94dc"/><circle cx="68.5" cy="51.0" r="1.8" fill="#8c94dc"/><circle cx="72.1" cy="62.3" r="1.8" fill="#b7bdf0"/><circle cx="76.5" cy="59.3" r="1.7" fill="#6e74c8"/><circle cx="68.4" cy="50.0" r="2.6" fill="#b7bdf0"/><circle cx="115" cy="33" r="9.3" fill="#dba6e0"/><circle cx="117.7" cy="23.6" r="2.3" fill="#c58cd4"/><circle cx="110.7" cy="22.7" r="2.5" fill="#dba6e0"/><circle cx="115.1" cy="42.2" r="2.0" fill="#e6c0ea"/><circle cx="116.5" cy="22.0" r="2.9" fill="#dba6e0"/><circle cx="115.0" cy="24.9" r="1.9" fill="#dba6e0"/><circle cx="112.3" cy="30.2" r="2.1" fill="#a86cc0"/><circle cx="121.4" cy="24.0" r="2.5" fill="#c58cd4"/><circle cx="112.7" cy="37.8" r="2.3" fill="#c58cd4"/><circle cx="119.8" cy="43.1" r="1.9" fill="#dba6e0"/><circle cx="125.7" cy="29.4" r="2.5" fill="#e6c0ea"/><circle cx="120.0" cy="28.8" r="2.7" fill="#dba6e0"/><circle cx="108.9" cy="39.6" r="2.2" fill="#dba6e0"/><circle cx="109.6" cy="23.9" r="2.6" fill="#a86cc0"/><circle cx="120.7" cy="25.1" r="1.7" fill="#dba6e0"/><circle cx="119.6" cy="36.0" r="1.6" fill="#dba6e0"/><circle cx="114.0" cy="36.0" r="2.1" fill="#a86cc0"/><circle cx="106.3" cy="28.3" r="2.7" fill="#e6c0ea"/><circle cx="116.4" cy="22.0" r="2.9" fill="#dba6e0"/><circle cx="115.3" cy="44.5" r="2.1" fill="#e6c0ea"/><circle cx="105.6" cy="28.9" r="2.1" fill="#e6c0ea"/><circle cx="118.7" cy="22.7" r="2.2" fill="#dba6e0"/><circle cx="112.5" cy="42.1" r="2.1" fill="#dba6e0"/><circle cx="120.2" cy="40.9" r="2.6" fill="#dba6e0"/><circle cx="124.0" cy="29.0" r="2.0" fill="#e6c0ea"/><circle cx="111.1" cy="32.4" r="1.7" fill="#dba6e0"/><circle cx="112.4" cy="33.9" r="2.7" fill="#dba6e0"/><circle cx="119.0" cy="28.6" r="2.9" fill="#a86cc0"/><circle cx="116.2" cy="29.2" r="2.8" fill="#dba6e0"/><circle cx="110.2" cy="42.2" r="1.9" fill="#e6c0ea"/><circle cx="114.7" cy="33.7" r="2.0" fill="#a86cc0"/><circle cx="110.7" cy="28.3" r="1.7" fill="#c58cd4"/><circle cx="120.1" cy="37.4" r="2.0" fill="#dba6e0"/><circle cx="110.6" cy="27.4" r="2.7" fill="#dba6e0"/><circle cx="112.6" cy="43.1" r="2.6" fill="#c58cd4"/><circle cx="114.0" cy="33.3" r="2.5" fill="#dba6e0"/><circle cx="122.2" cy="35.6" r="2.0" fill="#dba6e0"/><circle cx="108.8" cy="37.0" r="2.7" fill="#e6c0ea"/><circle cx="114.8" cy="25.6" r="1.9" fill="#e6c0ea"/><circle cx="121.7" cy="29.1" r="1.8" fill="#c58cd4"/><circle cx="116.9" cy="28.0" r="2.1" fill="#dba6e0"/><circle cx="110.4" cy="33.3" r="2.2" fill="#a86cc0"/><circle cx="117.7" cy="26.4" r="3.0" fill="#a86cc0"/><circle cx="107.0" cy="28.9" r="2.5" fill="#a86cc0"/><circle cx="123.7" cy="30.5" r="2.9" fill="#c58cd4"/><circle cx="114.8" cy="40.4" r="2.6" fill="#e6c0ea"/><circle cx="104.6" cy="28.4" r="2.3" fill="#dba6e0"/><circle cx="112.4" cy="33.7" r="2.3" fill="#e6c0ea"/><circle cx="119.0" cy="26.7" r="1.8" fill="#e6c0ea"/><circle cx="123.9" cy="26.7" r="2.4" fill="#e6c0ea"/><circle cx="111.0" cy="35.9" r="3.0" fill="#a86cc0"/><circle cx="113.4" cy="41.3" r="2.7" fill="#e6c0ea"/><circle cx="115.2" cy="44.3" r="2.3" fill="#c58cd4"/><circle cx="125.0" cy="29.7" r="1.8" fill="#e6c0ea"/><circle cx="105.4" cy="39.2" r="2.1" fill="#c58cd4"/><circle cx="115.1" cy="36.6" r="2.6" fill="#c58cd4"/><circle cx="109.5" cy="27.0" r="2.2" fill="#c58cd4"/><circle cx="105.5" cy="33.9" r="2.8" fill="#a86cc0"/><circle cx="111.0" cy="28.2" r="1.7" fill="#a86cc0"/><circle cx="104.4" cy="37.5" r="2.7" fill="#dba6e0"/><circle cx="106.3" cy="31.7" r="2.1" fill="#e6c0ea"/><circle cx="10" cy="75" r="10.2" fill="#a6aee6"/><circle cx="17.1" cy="81.0" r="2.1" fill="#b7bdf0"/><circle cx="18.8" cy="80.0" r="1.7" fill="#a6aee6"/><circle cx="16.3" cy="65.6" r="2.6" fill="#a6aee6"/><circle cx="12.8" cy="68.8" r="2.2" fill="#a6aee6"/><circle cx="15.6" cy="67.5" r="1.9" fill="#a6aee6"/><circle cx="21.7" cy="72.4" r="1.9" fill="#b7bdf0"/><circle cx="17.3" cy="84.8" r="2.9" fill="#6e74c8"/><circle cx="6.0" cy="66.4" r="2.1" fill="#b7bdf0"/><circle cx="8.3" cy="64.6" r="2.4" fill="#6e74c8"/><circle cx="-0.4" cy="78.8" r="2.6" fill="#b7bdf0"/><circle cx="8.8" cy="78.0" r="1.7" fill="#b7bdf0"/><circle cx="-2.3" cy="74.6" r="2.5" fill="#6e74c8"/><circle cx="16.8" cy="66.0" r="1.8" fill="#8c94dc"/><circle cx="6.1" cy="81.7" r="2.5" fill="#8c94dc"/><circle cx="16.8" cy="82.6" r="2.1" fill="#a6aee6"/><circle cx="15.5" cy="85.4" r="2.6" fill="#a6aee6"/><circle cx="20.0" cy="80.6" r="2.4" fill="#6e74c8"/><circle cx="10.0" cy="85.8" r="2.0" fill="#8c94dc"/><circle cx="14.8" cy="64.5" r="2.7" fill="#8c94dc"/><circle cx="5.0" cy="67.0" r="1.7" fill="#b7bdf0"/><circle cx="1.4" cy="73.8" r="2.8" fill="#b7bdf0"/><circle cx="11.7" cy="81.4" r="2.9" fill="#6e74c8"/><circle cx="3.4" cy="69.4" r="2.0" fill="#b7bdf0"/><circle cx="19.6" cy="79.7" r="2.8" fill="#6e74c8"/><circle cx="4.6" cy="79.9" r="1.6" fill="#8c94dc"/><circle cx="11.3" cy="80.1" r="2.7" fill="#6e74c8"/><circle cx="12.0" cy="64.4" r="2.0" fill="#b7bdf0"/><circle cx="19.9" cy="75.1" r="2.7" fill="#8c94dc"/><circle cx="11.2" cy="71.4" r="2.8" fill="#b7bdf0"/><circle cx="-0.8" cy="75.5" r="2.7" fill="#b7bdf0"/><circle cx="6.4" cy="75.3" r="2.7" fill="#8c94dc"/><circle cx="3.3" cy="68.3" r="2.3" fill="#8c94dc"/><circle cx="3.0" cy="71.8" r="2.4" fill="#6e74c8"/><circle cx="9.2" cy="76.2" r="1.7" fill="#b7bdf0"/><circle cx="18.2" cy="67.9" r="2.3" fill="#b7bdf0"/><circle cx="1.0" cy="67.8" r="3.0" fill="#6e74c8"/><circle cx="3.9" cy="75.5" r="2.2" fill="#a6aee6"/><circle cx="17.0" cy="71.5" r="2.9" fill="#b7bdf0"/><circle cx="9.6" cy="64.5" r="2.4" fill="#6e74c8"/><circle cx="16.6" cy="75.0" r="2.1" fill="#a6aee6"/><circle cx="4.1" cy="86.0" r="2.0" fill="#b7bdf0"/><circle cx="-2.2" cy="77.5" r="2.5" fill="#6e74c8"/><circle cx="4.9" cy="81.9" r="2.8" fill="#6e74c8"/><circle cx="1.8" cy="69.5" r="1.6" fill="#b7bdf0"/><circle cx="13.4" cy="80.1" r="2.5" fill="#a6aee6"/><circle cx="7.4" cy="71.6" r="2.2" fill="#a6aee6"/><circle cx="4.8" cy="64.3" r="2.1" fill="#6e74c8"/><circle cx="17.3" cy="75.6" r="2.7" fill="#b7bdf0"/><circle cx="8.9" cy="75.5" r="2.0" fill="#6e74c8"/><circle cx="18.7" cy="68.9" r="2.4" fill="#8c94dc"/><circle cx="11.9" cy="74.8" r="2.0" fill="#8c94dc"/><circle cx="0.7" cy="82.4" r="1.6" fill="#a6aee6"/><circle cx="-2.3" cy="75.4" r="2.9" fill="#8c94dc"/><circle cx="10.2" cy="64.2" r="1.9" fill="#6e74c8"/><circle cx="11.4" cy="75.4" r="2.2" fill="#8c94dc"/><circle cx="3.9" cy="73.1" r="2.7" fill="#a6aee6"/><circle cx="18.0" cy="66.1" r="1.9" fill="#b7bdf0"/><circle cx="8.2" cy="76.1" r="1.7" fill="#8c94dc"/><circle cx="13.8" cy="63.9" r="2.1" fill="#8c94dc"/><circle cx="-0.1" cy="80.4" r="2.7" fill="#b7bdf0"/><circle cx="53" cy="87" r="10.2" fill="#dba6e0"/><circle cx="58.7" cy="91.1" r="1.8" fill="#c58cd4"/><circle cx="52.6" cy="80.0" r="2.5" fill="#c58cd4"/><circle cx="63.2" cy="86.9" r="3.0" fill="#c58cd4"/><circle cx="57.8" cy="96.5" r="2.9" fill="#e6c0ea"/><circle cx="54.3" cy="85.2" r="1.9" fill="#e6c0ea"/><circle cx="60.3" cy="86.0" r="1.7" fill="#c58cd4"/><circle cx="41.2" cy="91.1" r="2.8" fill="#c58cd4"/><circle cx="53.3" cy="84.3" r="2.7" fill="#dba6e0"/><circle cx="60.0" cy="82.7" r="2.2" fill="#e6c0ea"/><circle cx="47.9" cy="91.7" r="2.5" fill="#dba6e0"/><circle cx="58.2" cy="79.1" r="2.3" fill="#c58cd4"/><circle cx="56.1" cy="88.8" r="2.6" fill="#dba6e0"/><circle cx="51.9" cy="81.2" r="2.7" fill="#a86cc0"/><circle cx="60.5" cy="82.4" r="1.8" fill="#dba6e0"/><circle cx="50.0" cy="76.2" r="2.5" fill="#c58cd4"/><circle cx="59.7" cy="93.1" r="2.9" fill="#a86cc0"/><circle cx="56.5" cy="81.2" r="2.7" fill="#a86cc0"/><circle cx="62.2" cy="90.8" r="1.7" fill="#e6c0ea"/><circle cx="64.3" cy="82.5" r="2.1" fill="#dba6e0"/><circle cx="43.0" cy="83.7" r="2.6" fill="#e6c0ea"/><circle cx="64.0" cy="88.8" r="2.5" fill="#c58cd4"/><circle cx="56.5" cy="95.6" r="2.6" fill="#c58cd4"/><circle cx="53.8" cy="96.8" r="2.8" fill="#e6c0ea"/><circle cx="58.4" cy="91.0" r="2.9" fill="#c58cd4"/><circle cx="62.3" cy="85.4" r="1.7" fill="#dba6e0"/><circle cx="49.5" cy="97.1" r="2.9" fill="#a86cc0"/><circle cx="48.7" cy="90.0" r="2.1" fill="#a86cc0"/><circle cx="65.2" cy="86.6" r="1.7" fill="#c58cd4"/><circle cx="46.2" cy="81.5" r="3.0" fill="#a86cc0"/><circle cx="58.6" cy="80.1" r="2.8" fill="#a86cc0"/><circle cx="59.5" cy="87.1" r="3.0" fill="#c58cd4"/><circle cx="58.1" cy="81.7" r="3.0" fill="#dba6e0"/><circle cx="47.3" cy="89.9" r="2.8" fill="#a86cc0"/><circle cx="50.1" cy="91.9" r="2.8" fill="#c58cd4"/><circle cx="45.7" cy="90.0" r="2.3" fill="#dba6e0"/><circle cx="47.6" cy="95.0" r="2.2" fill="#dba6e0"/><circle cx="58.4" cy="94.2" r="2.7" fill="#a86cc0"/><circle cx="46.6" cy="79.8" r="1.8" fill="#c58cd4"/><circle cx="59.8" cy="82.6" r="2.1" fill="#a86cc0"/><circle cx="45.4" cy="88.6" r="2.9" fill="#e6c0ea"/><circle cx="58.7" cy="90.7" r="1.6" fill="#a86cc0"/><circle cx="53.2" cy="91.8" r="1.8" fill="#dba6e0"/><circle cx="59.8" cy="92.6" r="2.9" fill="#a86cc0"/><circle cx="57.5" cy="88.9" r="2.3" fill="#a86cc0"/><circle cx="48.5" cy="84.2" r="1.6" fill="#dba6e0"/><circle cx="58.5" cy="94.6" r="2.9" fill="#dba6e0"/><circle cx="49.9" cy="81.4" r="2.7" fill="#c58cd4"/><circle cx="61.3" cy="80.0" r="1.9" fill="#a86cc0"/><circle cx="62.2" cy="95.3" r="2.2" fill="#a86cc0"/><circle cx="59.5" cy="83.5" r="2.7" fill="#dba6e0"/><circle cx="64.8" cy="91.2" r="2.9" fill="#c58cd4"/><circle cx="53.1" cy="76.0" r="1.6" fill="#c58cd4"/><circle cx="51.0" cy="92.0" r="2.8" fill="#a86cc0"/><circle cx="49.1" cy="75.2" r="2.1" fill="#c58cd4"/><circle cx="42.7" cy="81.0" r="3.0" fill="#a86cc0"/><circle cx="46.8" cy="85.3" r="2.6" fill="#a86cc0"/><circle cx="48.6" cy="87.4" r="1.8" fill="#dba6e0"/><circle cx="51.0" cy="78.5" r="2.9" fill="#c58cd4"/><circle cx="54.5" cy="96.4" r="3.0" fill="#e6c0ea"/><circle cx="57.6" cy="90.6" r="2.4" fill="#c58cd4"/><circle cx="107" cy="70" r="9.3" fill="#a6aee6"/><circle cx="117.6" cy="66.9" r="1.9" fill="#b7bdf0"/><circle cx="110.8" cy="74.8" r="2.9" fill="#a6aee6"/><circle cx="107.6" cy="79.9" r="2.7" fill="#6e74c8"/><circle cx="102.9" cy="59.2" r="1.9" fill="#b7bdf0"/><circle cx="114.4" cy="78.6" r="2.9" fill="#6e74c8"/><circle cx="101.9" cy="76.7" r="2.1" fill="#a6aee6"/><circle cx="103.3" cy="71.5" r="2.9" fill="#6e74c8"/><circle cx="108.0" cy="64.7" r="1.9" fill="#a6aee6"/><circle cx="100.5" cy="77.0" r="2.3" fill="#a6aee6"/><circle cx="98.9" cy="63.9" r="2.7" fill="#b7bdf0"/><circle cx="112.5" cy="76.5" r="2.5" fill="#a6aee6"/><circle cx="110.0" cy="59.4" r="2.4" fill="#6e74c8"/><circle cx="108.9" cy="64.2" r="2.6" fill="#b7bdf0"/><circle cx="107.5" cy="71.2" r="2.2" fill="#b7bdf0"/><circle cx="96.0" cy="66.9" r="2.6" fill="#6e74c8"/><circle cx="112.5" cy="68.7" r="1.9" fill="#6e74c8"/><circle cx="107.0" cy="67.5" r="2.7" fill="#b7bdf0"/><circle cx="115.2" cy="76.8" r="1.8" fill="#a6aee6"/><circle cx="117.3" cy="71.6" r="1.6" fill="#6e74c8"/><circle cx="102.7" cy="72.5" r="2.2" fill="#b7bdf0"/><circle cx="98.0" cy="71.5" r="1.6" fill="#a6aee6"/><circle cx="110.6" cy="77.8" r="2.2" fill="#8c94dc"/><circle cx="102.0" cy="69.5" r="1.9" fill="#6e74c8"/><circle cx="113.9" cy="74.2" r="2.5" fill="#8c94dc"/><circle cx="102.4" cy="60.7" r="3.0" fill="#a6aee6"/><circle cx="111.8" cy="66.7" r="2.7" fill="#b7bdf0"/><circle cx="102.8" cy="75.2" r="3.0" fill="#8c94dc"/><circle cx="113.8" cy="62.3" r="2.5" fill="#b7bdf0"/><circle cx="112.6" cy="74.2" r="1.7" fill="#a6aee6"/><circle cx="102.3" cy="71.5" r="2.4" fill="#6e74c8"/><circle cx="116.6" cy="71.2" r="2.7" fill="#6e74c8"/><circle cx="105.9" cy="65.5" r="2.2" fill="#6e74c8"/><circle cx="109.4" cy="78.9" r="2.5" fill="#a6aee6"/><circle cx="111.2" cy="75.3" r="1.9" fill="#6e74c8"/><circle cx="118.1" cy="68.0" r="3.0" fill="#8c94dc"/><circle cx="110.5" cy="74.1" r="2.6" fill="#b7bdf0"/><circle cx="99.6" cy="62.3" r="2.3" fill="#b7bdf0"/><circle cx="104.9" cy="70.3" r="2.3" fill="#a6aee6"/><circle cx="102.7" cy="77.4" r="2.7" fill="#a6aee6"/><circle cx="101.9" cy="72.2" r="2.4" fill="#b7bdf0"/><circle cx="98.3" cy="74.5" r="2.5" fill="#6e74c8"/><circle cx="100.5" cy="62.6" r="2.8" fill="#8c94dc"/><circle cx="101.9" cy="60.3" r="2.9" fill="#6e74c8"/><circle cx="101.2" cy="79.8" r="2.1" fill="#a6aee6"/><circle cx="111.9" cy="61.3" r="2.0" fill="#b7bdf0"/><circle cx="111.6" cy="70.5" r="2.0" fill="#8c94dc"/><circle cx="106.8" cy="68.6" r="2.7" fill="#6e74c8"/><circle cx="106.0" cy="62.9" r="2.3" fill="#a6aee6"/><circle cx="107.2" cy="63.3" r="2.0" fill="#6e74c8"/><circle cx="103.1" cy="78.1" r="2.0" fill="#6e74c8"/><circle cx="110.5" cy="59.7" r="2.1" fill="#b7bdf0"/><circle cx="110.4" cy="68.7" r="1.8" fill="#8c94dc"/><circle cx="100.3" cy="60.7" r="2.8" fill="#6e74c8"/><circle cx="116.2" cy="71.1" r="2.5" fill="#b7bdf0"/><circle cx="102.3" cy="60.6" r="2.1" fill="#6e74c8"/><circle cx="104.6" cy="68.9" r="2.3" fill="#b7bdf0"/><circle cx="111.7" cy="61.1" r="2.3" fill="#8c94dc"/><circle cx="107.6" cy="76.3" r="2.3" fill="#a6aee6"/><circle cx="106.1" cy="68.0" r="2.0" fill="#b7bdf0"/><circle cx="99.3" cy="72.0" r="1.9" fill="#a6aee6"/><circle cx="91" cy="85" r="8.5" fill="#dba6e0"/><circle cx="96.7" cy="91.1" r="1.8" fill="#dba6e0"/><circle cx="94.3" cy="92.0" r="2.9" fill="#a86cc0"/><circle cx="92.8" cy="86.5" r="2.5" fill="#a86cc0"/><circle cx="96.0" cy="87.6" r="2.4" fill="#dba6e0"/><circle cx="83.7" cy="85.2" r="2.1" fill="#c58cd4"/><circle cx="95.5" cy="81.9" r="2.9" fill="#a86cc0"/><circle cx="85.4" cy="82.6" r="2.7" fill="#c58cd4"/><circle cx="91.0" cy="88.3" r="2.8" fill="#a86cc0"/><circle cx="87.5" cy="75.6" r="2.3" fill="#dba6e0"/><circle cx="93.9" cy="87.1" r="2.3" fill="#dba6e0"/><circle cx="88.6" cy="77.7" r="2.9" fill="#dba6e0"/><circle cx="99.3" cy="81.5" r="2.0" fill="#e6c0ea"/><circle cx="97.2" cy="77.7" r="2.8" fill="#dba6e0"/><circle cx="94.7" cy="84.6" r="2.7" fill="#dba6e0"/><circle cx="97.5" cy="83.0" r="2.3" fill="#e6c0ea"/><circle cx="91.0" cy="89.9" r="2.5" fill="#a86cc0"/><circle cx="93.2" cy="81.1" r="1.9" fill="#c58cd4"/><circle cx="88.6" cy="93.4" r="1.8" fill="#e6c0ea"/><circle cx="96.1" cy="79.7" r="2.9" fill="#a86cc0"/><circle cx="89.4" cy="93.7" r="2.2" fill="#e6c0ea"/><circle cx="100.2" cy="84.1" r="2.7" fill="#e6c0ea"/><circle cx="89.5" cy="86.3" r="2.9" fill="#dba6e0"/><circle cx="97.8" cy="89.2" r="1.8" fill="#dba6e0"/><circle cx="88.4" cy="76.7" r="1.9" fill="#e6c0ea"/><circle cx="92.9" cy="78.5" r="2.3" fill="#dba6e0"/><circle cx="84.1" cy="81.3" r="2.5" fill="#a86cc0"/><circle cx="90.2" cy="85.0" r="1.7" fill="#e6c0ea"/><circle cx="90.7" cy="86.7" r="2.3" fill="#e6c0ea"/><circle cx="88.0" cy="77.4" r="2.6" fill="#dba6e0"/><circle cx="89.3" cy="76.7" r="2.2" fill="#a86cc0"/><circle cx="84.2" cy="81.5" r="2.1" fill="#dba6e0"/><circle cx="82.1" cy="90.6" r="1.9" fill="#c58cd4"/><circle cx="90.3" cy="89.4" r="2.8" fill="#a86cc0"/><circle cx="87.4" cy="90.5" r="1.8" fill="#e6c0ea"/><circle cx="97.0" cy="86.9" r="1.8" fill="#dba6e0"/><circle cx="98.3" cy="82.5" r="2.0" fill="#a86cc0"/><circle cx="96.3" cy="93.6" r="2.6" fill="#dba6e0"/><circle cx="88.9" cy="81.1" r="2.8" fill="#c58cd4"/><circle cx="88.3" cy="75.0" r="2.3" fill="#c58cd4"/><circle cx="92.9" cy="91.1" r="2.6" fill="#c58cd4"/><circle cx="81.6" cy="81.7" r="2.5" fill="#e6c0ea"/><circle cx="92.7" cy="76.2" r="2.3" fill="#c58cd4"/><circle cx="96.4" cy="78.8" r="1.7" fill="#dba6e0"/><circle cx="87.2" cy="75.6" r="2.0" fill="#e6c0ea"/><circle cx="84.7" cy="90.8" r="1.8" fill="#dba6e0"/><circle cx="94.1" cy="93.4" r="2.9" fill="#c58cd4"/><circle cx="91.8" cy="81.7" r="2.6" fill="#dba6e0"/><circle cx="92.0" cy="81.4" r="2.2" fill="#a86cc0"/><circle cx="95.6" cy="77.8" r="2.0" fill="#e6c0ea"/><circle cx="91.2" cy="79.8" r="1.6" fill="#e6c0ea"/><circle cx="97.9" cy="87.2" r="2.9" fill="#dba6e0"/><circle cx="91.2" cy="84.6" r="2.9" fill="#a86cc0"/><circle cx="93.1" cy="92.0" r="1.6" fill="#e6c0ea"/><circle cx="98.2" cy="87.8" r="2.3" fill="#a86cc0"/><circle cx="90.5" cy="77.7" r="2.8" fill="#c58cd4"/><circle cx="85.0" cy="81.1" r="2.1" fill="#e6c0ea"/><circle cx="84.2" cy="84.6" r="2.1" fill="#e6c0ea"/><circle cx="95.2" cy="91.3" r="2.1" fill="#a86cc0"/><circle cx="89.4" cy="83.9" r="2.2" fill="#c58cd4"/><circle cx="98.3" cy="83.3" r="2.0" fill="#a86cc0"/><circle cx="108" cy="96" r="9.3" fill="#e9df6a"/><circle cx="117.3" cy="101.3" r="2.2" fill="#8c94dc"/><circle cx="118.8" cy="92.0" r="2.8" fill="#7a4f8a"/><circle cx="98.9" cy="89.8" r="2.7" fill="#7a4f8a"/><circle cx="109.0" cy="103.1" r="2.1" fill="#7a4f8a"/><circle cx="97.7" cy="99.3" r="2.5" fill="#7a4f8a"/><circle cx="111.5" cy="103.5" r="1.8" fill="#8c94dc"/><circle cx="107.8" cy="84.8" r="2.6" fill="#a6aee6"/><circle cx="108.8" cy="100.1" r="2.9" fill="#e9df6a"/><circle cx="102.2" cy="95.3" r="2.3" fill="#8c94dc"/><circle cx="105.1" cy="95.0" r="2.5" fill="#7a4f8a"/><circle cx="110.6" cy="106.7" r="1.6" fill="#7a4f8a"/><circle cx="104.2" cy="94.8" r="2.0" fill="#a6aee6"/><circle cx="107.8" cy="89.0" r="2.0" fill="#8c94dc"/><circle cx="108.4" cy="89.7" r="2.6" fill="#e9df6a"/><circle cx="116.2" cy="89.2" r="1.9" fill="#7a4f8a"/><circle cx="100.1" cy="90.0" r="2.8" fill="#e9df6a"/><circle cx="101.6" cy="95.7" r="2.2" fill="#a6aee6"/><circle cx="117.0" cy="98.6" r="2.5" fill="#a6aee6"/><circle cx="98.6" cy="102.6" r="2.4" fill="#a6aee6"/><circle cx="103.4" cy="106.3" r="2.9" fill="#8c94dc"/><circle cx="116.1" cy="98.6" r="3.0" fill="#a6aee6"/><circle cx="114.4" cy="98.3" r="3.0" fill="#8c94dc"/><circle cx="98.5" cy="89.6" r="2.7" fill="#a6aee6"/><circle cx="114.8" cy="97.0" r="1.6" fill="#7a4f8a"/><circle cx="107.6" cy="105.7" r="2.2" fill="#a6aee6"/><circle cx="106.6" cy="100.2" r="2.8" fill="#8c94dc"/><circle cx="110.3" cy="106.8" r="2.2" fill="#7a4f8a"/><circle cx="112.7" cy="96.3" r="2.5" fill="#8c94dc"/><circle cx="101.4" cy="104.6" r="1.8" fill="#e9df6a"/><circle cx="106.9" cy="89.9" r="1.9" fill="#7a4f8a"/><circle cx="109.1" cy="93.5" r="2.8" fill="#7a4f8a"/><circle cx="113.8" cy="102.2" r="2.5" fill="#8c94dc"/><circle cx="103.4" cy="86.5" r="2.0" fill="#8c94dc"/><circle cx="111.9" cy="103.6" r="2.9" fill="#8c94dc"/><circle cx="111.8" cy="105.2" r="2.8" fill="#7a4f8a"/><circle cx="102.6" cy="100.2" r="2.5" fill="#8c94dc"/><circle cx="103.0" cy="89.2" r="1.7" fill="#8c94dc"/><circle cx="106.3" cy="106.7" r="2.7" fill="#7a4f8a"/><circle cx="109.8" cy="106.2" r="2.8" fill="#7a4f8a"/><circle cx="97.9" cy="91.5" r="2.2" fill="#8c94dc"/><circle cx="110.5" cy="103.0" r="2.8" fill="#a6aee6"/><circle cx="109.2" cy="105.9" r="1.7" fill="#8c94dc"/><circle cx="118.7" cy="94.7" r="2.7" fill="#8c94dc"/><circle cx="98.4" cy="92.2" r="1.9" fill="#7a4f8a"/><circle cx="98.8" cy="97.3" r="2.8" fill="#7a4f8a"/><circle cx="114.7" cy="99.3" r="1.7" fill="#8c94dc"/><circle cx="110.7" cy="87.8" r="2.7" fill="#a6aee6"/><circle cx="104.0" cy="96.3" r="2.5" fill="#8c94dc"/><circle cx="100.8" cy="92.5" r="1.9" fill="#7a4f8a"/><circle cx="108.5" cy="88.4" r="2.6" fill="#7a4f8a"/><circle cx="111.9" cy="93.7" r="1.7" fill="#8c94dc"/><circle cx="107.1" cy="102.8" r="2.5" fill="#e9df6a"/><circle cx="104.8" cy="95.6" r="2.0" fill="#7a4f8a"/><circle cx="114.6" cy="95.0" r="2.1" fill="#8c94dc"/><circle cx="113.2" cy="103.7" r="2.7" fill="#e9df6a"/><circle cx="118.1" cy="91.4" r="1.9" fill="#a6aee6"/><circle cx="103.0" cy="95.6" r="2.5" fill="#e9df6a"/><circle cx="100.5" cy="95.2" r="2.9" fill="#e9df6a"/><circle cx="113.0" cy="99.9" r="2.8" fill="#e9df6a"/><circle cx="100.4" cy="93.8" r="3.0" fill="#7a4f8a"/><circle cx="18" cy="100" r="9.3" fill="#dba6e0"/><circle cx="23.6" cy="100.2" r="2.4" fill="#a86cc0"/><circle cx="23.4" cy="104.8" r="3.0" fill="#a86cc0"/><circle cx="7.6" cy="96.6" r="2.6" fill="#a86cc0"/><circle cx="17.5" cy="94.9" r="2.2" fill="#dba6e0"/><circle cx="23.9" cy="94.6" r="1.9" fill="#a86cc0"/><circle cx="17.4" cy="101.2" r="2.2" fill="#dba6e0"/><circle cx="18.6" cy="93.6" r="2.2" fill="#e6c0ea"/><circle cx="27.6" cy="101.0" r="2.4" fill="#c58cd4"/><circle cx="7.9" cy="102.8" r="2.0" fill="#c58cd4"/><circle cx="20.8" cy="94.3" r="1.8" fill="#e6c0ea"/><circle cx="27.6" cy="99.6" r="1.9" fill="#dba6e0"/><circle cx="22.8" cy="89.9" r="2.8" fill="#c58cd4"/><circle cx="11.6" cy="98.5" r="1.9" fill="#dba6e0"/><circle cx="22.5" cy="94.8" r="2.8" fill="#a86cc0"/><circle cx="11.0" cy="103.3" r="2.5" fill="#dba6e0"/><circle cx="14.5" cy="102.9" r="1.8" fill="#dba6e0"/><circle cx="21.8" cy="108.5" r="2.0" fill="#a86cc0"/><circle cx="14.7" cy="99.4" r="2.6" fill="#c58cd4"/><circle cx="18.0" cy="104.4" r="2.5" fill="#dba6e0"/><circle cx="28.9" cy="101.2" r="2.4" fill="#a86cc0"/><circle cx="10.9" cy="96.9" r="2.4" fill="#dba6e0"/><circle cx="21.5" cy="89.7" r="2.2" fill="#e6c0ea"/><circle cx="28.2" cy="104.1" r="1.8" fill="#dba6e0"/><circle cx="16.8" cy="92.6" r="2.9" fill="#c58cd4"/><circle cx="16.6" cy="96.3" r="2.4" fill="#c58cd4"/><circle cx="16.3" cy="101.8" r="1.9" fill="#c58cd4"/><circle cx="16.7" cy="98.0" r="2.9" fill="#a86cc0"/><circle cx="18.0" cy="102.3" r="2.5" fill="#a86cc0"/><circle cx="21.4" cy="99.2" r="2.0" fill="#e6c0ea"/><circle cx="16.0" cy="100.8" r="2.1" fill="#e6c0ea"/><circle cx="26.1" cy="94.8" r="1.7" fill="#a86cc0"/><circle cx="10.0" cy="100.2" r="2.6" fill="#a86cc0"/><circle cx="14.6" cy="105.9" r="1.9" fill="#dba6e0"/><circle cx="15.1" cy="90.4" r="2.5" fill="#dba6e0"/><circle cx="21.7" cy="107.4" r="1.8" fill="#dba6e0"/><circle cx="20.7" cy="109.4" r="2.0" fill="#a86cc0"/><circle cx="22.3" cy="101.4" r="2.7" fill="#e6c0ea"/><circle cx="24.6" cy="103.8" r="2.4" fill="#c58cd4"/><circle cx="13.0" cy="89.9" r="1.9" fill="#a86cc0"/><circle cx="17.9" cy="95.4" r="2.4" fill="#c58cd4"/><circle cx="21.0" cy="94.1" r="2.5" fill="#dba6e0"/><circle cx="24.7" cy="101.3" r="1.9" fill="#dba6e0"/><circle cx="20.6" cy="90.2" r="2.8" fill="#e6c0ea"/><circle cx="20.3" cy="95.3" r="2.1" fill="#a86cc0"/><circle cx="24.9" cy="92.8" r="2.3" fill="#a86cc0"/><circle cx="15.4" cy="98.0" r="2.9" fill="#c58cd4"/><circle cx="10.2" cy="104.3" r="2.2" fill="#dba6e0"/><circle cx="10.1" cy="100.7" r="1.8" fill="#e6c0ea"/><circle cx="24.6" cy="108.9" r="2.4" fill="#a86cc0"/><circle cx="16.0" cy="106.9" r="2.3" fill="#e6c0ea"/><circle cx="7.6" cy="97.4" r="2.0" fill="#a86cc0"/><circle cx="23.4" cy="92.8" r="1.6" fill="#dba6e0"/><circle cx="10.9" cy="105.6" r="2.5" fill="#dba6e0"/><circle cx="14.2" cy="93.0" r="1.8" fill="#c58cd4"/><circle cx="19.3" cy="102.8" r="2.6" fill="#c58cd4"/><circle cx="22.1" cy="92.8" r="2.1" fill="#e6c0ea"/><circle cx="24.7" cy="91.9" r="2.5" fill="#c58cd4"/><circle cx="21.8" cy="89.2" r="2.0" fill="#e6c0ea"/><circle cx="20.6" cy="104.5" r="2.8" fill="#e6c0ea"/><circle cx="11.5" cy="98.4" r="2.5" fill="#e6c0ea"/><circle cx="100" cy="5" r="6.0" fill="#a6aee6"/><circle cx="102.8" cy="8.0" r="2.8" fill="#b7bdf0"/><circle cx="102.6" cy="-1.7" r="2.5" fill="#b7bdf0"/><circle cx="101.6" cy="3.1" r="1.9" fill="#a6aee6"/><circle cx="96.7" cy="0.9" r="2.5" fill="#b7bdf0"/><circle cx="94.6" cy="4.4" r="2.1" fill="#a6aee6"/><circle cx="101.9" cy="-0.1" r="1.6" fill="#6e74c8"/><circle cx="97.0" cy="7.6" r="1.8" fill="#8c94dc"/><circle cx="101.5" cy="11.0" r="2.9" fill="#6e74c8"/><circle cx="98.9" cy="7.6" r="2.6" fill="#b7bdf0"/><circle cx="97.2" cy="0.5" r="1.6" fill="#a6aee6"/><circle cx="97.0" cy="-1.0" r="2.3" fill="#a6aee6"/><circle cx="98.6" cy="4.6" r="3.0" fill="#6e74c8"/><circle cx="97.4" cy="6.9" r="1.7" fill="#b7bdf0"/><circle cx="101.2" cy="7.4" r="2.7" fill="#b7bdf0"/><circle cx="98.6" cy="0.5" r="2.3" fill="#a6aee6"/><circle cx="100.3" cy="5.4" r="2.6" fill="#8c94dc"/><circle cx="101.9" cy="-1.8" r="2.9" fill="#b7bdf0"/><circle cx="102.3" cy="6.6" r="1.7" fill="#a6aee6"/><circle cx="99.9" cy="8.0" r="1.7" fill="#8c94dc"/><circle cx="94.4" cy="0.8" r="2.3" fill="#b7bdf0"/><circle cx="100.4" cy="6.2" r="2.9" fill="#b7bdf0"/><circle cx="96.2" cy="7.0" r="1.7" fill="#a6aee6"/><circle cx="102.5" cy="0.9" r="1.8" fill="#6e74c8"/><circle cx="94.8" cy="6.6" r="2.0" fill="#a6aee6"/><circle cx="99.6" cy="11.4" r="1.9" fill="#a6aee6"/><circle cx="98.2" cy="0.5" r="2.0" fill="#b7bdf0"/><circle cx="102.0" cy="3.9" r="1.9" fill="#b7bdf0"/><circle cx="99.8" cy="-2.3" r="2.3" fill="#b7bdf0"/><circle cx="103.6" cy="0.0" r="2.5" fill="#8c94dc"/><circle cx="99.9" cy="7.4" r="1.9" fill="#a6aee6"/><circle cx="100.5" cy="5.4" r="1.9" fill="#b7bdf0"/><circle cx="101.8" cy="4.2" r="2.7" fill="#b7bdf0"/><circle cx="104.8" cy="5.4" r="2.0" fill="#a6aee6"/><circle cx="101.5" cy="10.2" r="2.2" fill="#a6aee6"/><circle cx="95.1" cy="4.1" r="2.0" fill="#a6aee6"/><circle cx="106.9" cy="3.5" r="2.0" fill="#8c94dc"/><circle cx="97.8" cy="11.7" r="2.6" fill="#b7bdf0"/><circle cx="98.6" cy="7.0" r="2.7" fill="#b7bdf0"/><circle cx="100.3" cy="7.1" r="2.8" fill="#8c94dc"/><circle cx="97.2" cy="7.9" r="2.4" fill="#8c94dc"/><circle cx="101.7" cy="-1.3" r="2.6" fill="#a6aee6"/><circle cx="105.7" cy="9.3" r="2.2" fill="#a6aee6"/><circle cx="97.3" cy="8.5" r="2.9" fill="#6e74c8"/><circle cx="96.2" cy="1.4" r="1.9" fill="#a6aee6"/><circle cx="95.7" cy="5.8" r="2.8" fill="#b7bdf0"/><circle cx="97.2" cy="11.4" r="2.5" fill="#8c94dc"/><circle cx="102.6" cy="7.1" r="2.0" fill="#6e74c8"/><circle cx="106.6" cy="4.9" r="2.3" fill="#a6aee6"/><circle cx="98.9" cy="10.2" r="1.9" fill="#6e74c8"/><circle cx="100.1" cy="6.2" r="2.8" fill="#6e74c8"/><circle cx="104.1" cy="6.3" r="2.9" fill="#a6aee6"/><circle cx="102.6" cy="1.0" r="2.2" fill="#6e74c8"/><circle cx="95.1" cy="-0.2" r="3.0" fill="#a6aee6"/><circle cx="102.4" cy="1.3" r="1.8" fill="#a6aee6"/><circle cx="93.7" cy="8.7" r="1.6" fill="#8c94dc"/><circle cx="96.7" cy="6.0" r="2.9" fill="#b7bdf0"/><circle cx="104.5" cy="4.4" r="2.0" fill="#a6aee6"/><circle cx="104.9" cy="10.0" r="2.3" fill="#6e74c8"/><circle cx="98.8" cy="2.3" r="2.4" fill="#6e74c8"/><circle cx="103.1" cy="1.3" r="3.0" fill="#8c94dc"/><circle cx="126" cy="90" r="5.1" fill="#a6aee6"/><circle cx="128.2" cy="93.9" r="1.7" fill="#8c94dc"/><circle cx="123.4" cy="94.0" r="2.8" fill="#8c94dc"/><circle cx="124.0" cy="95.3" r="2.4" fill="#b7bdf0"/><circle cx="126.6" cy="95.9" r="2.1" fill="#a6aee6"/><circle cx="124.9" cy="88.3" r="2.5" fill="#a6aee6"/><circle cx="124.0" cy="93.5" r="3.0" fill="#b7bdf0"/><circle cx="131.7" cy="89.0" r="2.3" fill="#a6aee6"/><circle cx="127.2" cy="93.6" r="2.8" fill="#b7bdf0"/><circle cx="126.1" cy="86.9" r="2.8" fill="#a6aee6"/><circle cx="124.3" cy="92.3" r="2.3" fill="#6e74c8"/><circle cx="124.5" cy="88.2" r="2.8" fill="#8c94dc"/><circle cx="122.7" cy="91.1" r="2.4" fill="#8c94dc"/><circle cx="124.8" cy="85.2" r="2.2" fill="#8c94dc"/><circle cx="125.1" cy="90.2" r="3.0" fill="#a6aee6"/><circle cx="127.0" cy="85.8" r="2.9" fill="#8c94dc"/><circle cx="126.1" cy="84.9" r="1.9" fill="#6e74c8"/><circle cx="126.4" cy="92.9" r="2.4" fill="#a6aee6"/><circle cx="124.0" cy="85.5" r="2.3" fill="#6e74c8"/><circle cx="123.3" cy="89.0" r="2.6" fill="#a6aee6"/><circle cx="124.0" cy="85.6" r="2.3" fill="#b7bdf0"/><circle cx="120.2" cy="92.3" r="2.1" fill="#6e74c8"/><circle cx="129.5" cy="94.1" r="1.8" fill="#b7bdf0"/><circle cx="123.3" cy="87.6" r="1.8" fill="#8c94dc"/><circle cx="122.7" cy="91.4" r="2.1" fill="#6e74c8"/><circle cx="129.3" cy="92.4" r="2.7" fill="#6e74c8"/><circle cx="128.2" cy="88.4" r="1.7" fill="#6e74c8"/><circle cx="122.0" cy="93.3" r="2.1" fill="#6e74c8"/><circle cx="130.2" cy="89.4" r="2.4" fill="#a6aee6"/><circle cx="132.0" cy="89.7" r="1.7" fill="#8c94dc"/><circle cx="130.3" cy="93.6" r="2.8" fill="#6e74c8"/><circle cx="126.8" cy="87.8" r="1.9" fill="#6e74c8"/><circle cx="130.6" cy="91.3" r="2.8" fill="#8c94dc"/><circle cx="125.0" cy="89.4" r="2.4" fill="#b7bdf0"/><circle cx="120.6" cy="89.0" r="2.6" fill="#8c94dc"/><circle cx="122.6" cy="92.1" r="2.5" fill="#a6aee6"/><circle cx="128.9" cy="94.1" r="1.7" fill="#b7bdf0"/><circle cx="126.3" cy="86.0" r="1.9" fill="#6e74c8"/><circle cx="125.8" cy="83.7" r="1.9" fill="#6e74c8"/><circle cx="123.7" cy="92.7" r="3.0" fill="#a6aee6"/><circle cx="122.1" cy="90.9" r="3.0" fill="#6e74c8"/><circle cx="123.7" cy="88.0" r="2.8" fill="#6e74c8"/><circle cx="131.7" cy="92.2" r="2.4" fill="#a6aee6"/><circle cx="130.1" cy="94.2" r="1.8" fill="#a6aee6"/><circle cx="126.1" cy="92.2" r="2.6" fill="#6e74c8"/><circle cx="123.4" cy="94.8" r="2.3" fill="#a6aee6"/><circle cx="125.9" cy="89.6" r="2.9" fill="#a6aee6"/><circle cx="128.5" cy="89.8" r="2.7" fill="#a6aee6"/><circle cx="122.0" cy="88.7" r="2.8" fill="#8c94dc"/><circle cx="121.6" cy="92.2" r="2.5" fill="#b7bdf0"/><circle cx="132.1" cy="88.9" r="2.7" fill="#8c94dc"/><circle cx="120.7" cy="90.1" r="2.7" fill="#8c94dc"/><circle cx="121.2" cy="90.0" r="2.5" fill="#6e74c8"/><circle cx="126.5" cy="88.8" r="2.6" fill="#8c94dc"/><circle cx="124.3" cy="93.3" r="2.4" fill="#b7bdf0"/><circle cx="122.5" cy="92.5" r="1.8" fill="#a6aee6"/><circle cx="124.7" cy="92.8" r="2.2" fill="#6e74c8"/><circle cx="123.6" cy="90.0" r="2.3" fill="#a6aee6"/><circle cx="122.1" cy="94.3" r="2.3" fill="#a6aee6"/><circle cx="120.7" cy="87.6" r="1.9" fill="#a6aee6"/><circle cx="119.7" cy="90.3" r="2.5" fill="#8c94dc"/><circle cx="126" cy="10" r="4.2" fill="#dba6e0"/><circle cx="124.9" cy="8.2" r="2.4" fill="#a86cc0"/><circle cx="126.1" cy="9.9" r="1.8" fill="#e6c0ea"/><circle cx="126.2" cy="8.4" r="1.9" fill="#e6c0ea"/><circle cx="124.2" cy="9.6" r="2.5" fill="#dba6e0"/><circle cx="125.1" cy="9.2" r="2.9" fill="#a86cc0"/><circle cx="125.6" cy="13.8" r="3.0" fill="#dba6e0"/><circle cx="128.2" cy="7.8" r="2.7" fill="#e6c0ea"/><circle cx="123.3" cy="13.5" r="1.6" fill="#e6c0ea"/><circle cx="123.3" cy="7.7" r="2.7" fill="#a86cc0"/><circle cx="128.0" cy="10.3" r="2.3" fill="#c58cd4"/><circle cx="129.7" cy="9.8" r="1.8" fill="#c58cd4"/><circle cx="128.4" cy="6.3" r="2.4" fill="#a86cc0"/><circle cx="127.7" cy="9.7" r="2.4" fill="#a86cc0"/><circle cx="125.3" cy="8.0" r="2.3" fill="#c58cd4"/><circle cx="127.1" cy="10.8" r="1.9" fill="#a86cc0"/><circle cx="128.4" cy="8.0" r="2.9" fill="#e6c0ea"/><circle cx="128.5" cy="12.2" r="1.8" fill="#dba6e0"/><circle cx="125.3" cy="12.5" r="1.9" fill="#dba6e0"/><circle cx="126.1" cy="8.7" r="2.0" fill="#dba6e0"/><circle cx="125.4" cy="15.1" r="2.5" fill="#dba6e0"/><circle cx="123.5" cy="8.4" r="1.8" fill="#dba6e0"/><circle cx="128.0" cy="14.2" r="2.3" fill="#c58cd4"/><circle cx="122.3" cy="9.3" r="2.6" fill="#c58cd4"/><circle cx="122.2" cy="7.7" r="2.4" fill="#e6c0ea"/><circle cx="124.6" cy="9.5" r="2.2" fill="#c58cd4"/><circle cx="127.0" cy="8.1" r="2.3" fill="#dba6e0"/><circle cx="125.6" cy="7.8" r="2.9" fill="#e6c0ea"/><circle cx="128.1" cy="7.1" r="2.8" fill="#a86cc0"/><circle cx="126.0" cy="7.0" r="2.0" fill="#dba6e0"/><circle cx="124.7" cy="6.8" r="2.6" fill="#dba6e0"/><circle cx="122.6" cy="8.4" r="1.9" fill="#a86cc0"/><circle cx="126.4" cy="12.3" r="2.6" fill="#e6c0ea"/><circle cx="123.1" cy="5.7" r="2.0" fill="#e6c0ea"/><circle cx="122.8" cy="12.1" r="2.7" fill="#e6c0ea"/><circle cx="127.8" cy="12.2" r="2.4" fill="#a86cc0"/><circle cx="131.1" cy="8.7" r="2.6" fill="#a86cc0"/><circle cx="123.1" cy="7.3" r="1.8" fill="#c58cd4"/><circle cx="126.7" cy="7.8" r="2.5" fill="#dba6e0"/><circle cx="129.1" cy="12.3" r="3.0" fill="#e6c0ea"/><circle cx="123.6" cy="10.0" r="2.4" fill="#a86cc0"/><circle cx="124.6" cy="6.4" r="2.7" fill="#a86cc0"/><circle cx="124.3" cy="14.0" r="2.2" fill="#dba6e0"/><circle cx="124.1" cy="9.5" r="2.8" fill="#a86cc0"/><circle cx="129.0" cy="11.4" r="2.0" fill="#e6c0ea"/><circle cx="127.6" cy="10.6" r="2.1" fill="#a86cc0"/><circle cx="124.2" cy="9.5" r="2.7" fill="#c58cd4"/><circle cx="123.2" cy="9.7" r="3.0" fill="#a86cc0"/><circle cx="128.1" cy="8.6" r="1.9" fill="#e6c0ea"/><circle cx="123.4" cy="7.1" r="2.2" fill="#a86cc0"/><circle cx="122.3" cy="7.7" r="2.7" fill="#a86cc0"/><circle cx="125.7" cy="12.0" r="2.3" fill="#e6c0ea"/><circle cx="123.2" cy="6.1" r="2.3" fill="#e6c0ea"/><circle cx="128.0" cy="6.0" r="2.3" fill="#e6c0ea"/><circle cx="127.6" cy="15.0" r="2.8" fill="#dba6e0"/><circle cx="128.1" cy="5.7" r="2.8" fill="#dba6e0"/><circle cx="130.7" cy="11.7" r="2.2" fill="#e6c0ea"/><circle cx="124.9" cy="12.3" r="2.9" fill="#c58cd4"/><circle cx="124.7" cy="6.5" r="2.2" fill="#a86cc0"/><circle cx="124.0" cy="8.3" r="2.9" fill="#c58cd4"/><circle cx="125.3" cy="12.9" r="1.8" fill="#e6c0ea"/></svg>
<div class="a" style="left:492px;top:713px;width:1px;height:107px;background:#000"></div>
<div class="a" style="left:618px;top:713px;width:1px;height:107px;background:#000"></div>
<div class="a" style="left:492px;top:713px;width:127px;height:1px;background:#000"></div>
<div class="a" style="left:492px;top:819px;width:127px;height:1px;background:#000"></div>
<svg class="a" style="left:492px;top:820px" width="127" height="51" viewBox="0 0 127 51"><rect width="127" height="51" fill="#e4e9d8"/></svg>
<div class="a" style="left:492px;top:820px;width:1px;height:51px;background:#000"></div>
<div class="a" style="left:618px;top:820px;width:1px;height:51px;background:#000"></div>
<div class="a" style="left:2px;top:57px;width:29px;height:815px;background:#fffaf0;border-left:1px solid #a39d92"></div>
<div class="a" style="left:2px;top:57px;width:29px;height:1px;background:#9b9589"></div>
<div class="a" style="left:32px;top:58px;width:103px;height:814px;background:#fff"></div>
<div class="a" style="left:37px;top:48px;width:94px;height:12px;background:#fff"></div>
<div class="a" style="left:31px;top:57px;width:1px;height:815px;background:#000"></div>
<div class="a" style="left:135px;top:61px;width:1px;height:811px;background:#9b9589"></div>
<div class="a" style="left:2px;top:115px;width:29px;height:1px;background:#000"></div>
<div class="a" style="left:6px;top:118px;width:11px;height:11px;border:1px solid #222;border-radius:1px;background:#fffaf0"></div>
<div class="a" style="left:8px;top:123px;width:7px;height:1px;background:#222"></div>
<svg class="a" style="left:0;top:0" width="140" height="885"><line x1="37" y1="58.5" x2="84" y2="59.5" stroke="#000" stroke-width="1.1" shape-rendering="crispEdges"/><line x1="84" y1="59.5" x2="131" y2="61.5" stroke="#000" stroke-width="1.1" shape-rendering="crispEdges"/><line x1="32" y1="115.5" x2="80" y2="117" stroke="#000" stroke-width="1.1" shape-rendering="crispEdges"/><line x1="80" y1="117" x2="135" y2="119.5" stroke="#000" stroke-width="1.1" shape-rendering="crispEdges"/><line x1="34" y1="240.5" x2="80" y2="240.5" stroke="#000" stroke-width="1.1" shape-rendering="crispEdges"/><line x1="80" y1="241" x2="131" y2="241" stroke="#000" stroke-width="1.1" shape-rendering="crispEdges"/><line x1="33" y1="349" x2="135" y2="349.5" stroke="#000" stroke-width="1.1" shape-rendering="crispEdges"/><line x1="32" y1="362" x2="135" y2="362.5" stroke="#000" stroke-width="1.1" shape-rendering="crispEdges"/><line x1="32" y1="472" x2="135" y2="471" stroke="#000" stroke-width="1.1" shape-rendering="crispEdges"/><line x1="32" y1="576.5" x2="135" y2="577" stroke="#000" stroke-width="1.1" shape-rendering="crispEdges"/><line x1="32" y1="680.5" x2="80" y2="681.5" stroke="#000" stroke-width="1.1" shape-rendering="crispEdges"/><line x1="80" y1="682" x2="135" y2="683" stroke="#000" stroke-width="1.1" shape-rendering="crispEdges"/><line x1="32" y1="711.5" x2="80" y2="712" stroke="#000" stroke-width="1.1" shape-rendering="crispEdges"/><line x1="80" y1="712.5" x2="135" y2="713" stroke="#000" stroke-width="1.1" shape-rendering="crispEdges"/><line x1="32" y1="820.5" x2="135" y2="820.5" stroke="#000" stroke-width="1.1" shape-rendering="crispEdges"/></svg>
<div class="t " style="left:59px;top:79px;font-size:14px;letter-spacing:0.4px;color:#161616;line-height:16px;font-size:15px;letter-spacing:0">Месяц</div>
<div class="t " style="left:58px;top:164px;font-size:14px;letter-spacing:0.4px;color:#161616;line-height:16px">Декабрь</div>
<div class="t " style="left:55px;top:277px;font-size:14px;letter-spacing:0.4px;color:#161616;line-height:16px">Декабрь</div>
<div class="t " style="left:52px;top:344px;font-size:14px;letter-spacing:0.4px;color:#161616;line-height:16px">Декабрь</div>
<div class="t " style="left:45px;top:416px;font-size:14px;letter-spacing:0.4px;color:#161616;line-height:16px">Декабрь</div>
<div class="t " style="left:57px;top:519px;font-size:14px;letter-spacing:0.4px;color:#161616;line-height:16px">Декабрь</div>
<div class="t " style="left:62px;top:617px;font-size:14px;letter-spacing:0.4px;color:#161616;line-height:16px">Декабрь</div>
<div class="t " style="left:58px;top:688px;font-size:14px;letter-spacing:0.4px;color:#161616;line-height:16px">Декабрь</div>
<div class="t " style="left:61px;top:742px;font-size:14px;letter-spacing:0.4px;color:#161616;line-height:16px">Декабрь</div>
<div class="t " style="left:54px;top:842px;font-size:14px;letter-spacing:0.4px;color:#161616;line-height:16px">Декабрь</div>
<div class="a" style="left:553px;top:147px;width:707px;height:524px;background:#93b1d6;border-left:1px solid #cfe3f0"></div>
<div class="a" style="left:553px;top:671px;width:707px;height:1px;background:#6a82a2"></div>
<div class="a" style="left:553px;top:147px;width:707px;height:21px;background:linear-gradient(#a8bedd,#9bb4d7)"></div>
<div class="a" style="left:557px;top:168px;width:700px;height:475px;background:#fdf9ee"></div>
<div class="a" style="left:557px;top:643px;width:700px;height:25px;background:#ebe6dc;border-top:1px solid #a9a397"></div>
<svg class="a" style="left:557px;top:150px" width="18" height="18" viewBox="0 0 18 18">
<path d="M8 3L16 7L12 17L4 14z" fill="#f4f4f4" stroke="#8a8a8a" stroke-width=".8" stroke-dasharray="1 .6"/>
<path d="M7 2L13 5L10 16L3 14z" fill="#fafafa" stroke="#9a9a9a" stroke-width=".8"/>
<rect x="1.5" y="1.5" width="9" height="14" fill="#fff" stroke="#8c8c8c"/>
<path d="M3 3.5h2M7 3.5h2" stroke="#1a1aa0" stroke-width="1.2"/>
<path d="M3 6.5h6M3 8.5h6M3 10.5h6M3 12.5h6M5 5.5v8M7 5.5v8" stroke="#b8b8b8" stroke-width=".8"/>
</svg>
<div class="t b" style="left:578px;top:149px;font-size:12px;line-height:20px">Настройки</div>
<div class="a" style="left:1221px;top:154px;width:12px;height:10px;border:1px solid #111;border-top:2px solid #111"></div>
<svg class="a" style="left:1242px;top:154px" width="11" height="10"><path d="M1 1L10 9M10 1L1 9" stroke="#111" stroke-width="2"/></svg>
<div class="t " style="left:565px;top:179px;">Период с:</div>
<div class="a" style="left:622px;top:176px;width:80px;height:19px;background:#fff;border:1px solid #8b8578"></div>
<div class="t " style="left:625px;top:179px;">01.12.2021</div>
<div class="a" style="left:687px;top:177px;width:14px;height:17px;background:#ebe6dc;border-left:1px solid #c8c2b6"></div>
<svg class="a" style="left:690px;top:181px" width="9" height="9" shape-rendering="crispEdges"><rect x="0" y="0" width="9" height="9" fill="#fff"/><rect x="0" y="0" width="9" height="2" fill="#000"/><rect x="0" y="2" width="1" height="7" fill="#000"/><rect x="8" y="2" width="1" height="7" fill="#000"/><rect x="0" y="8" width="9" height="1" fill="#000"/><rect x="0" y="4" width="9" height="1" fill="#000"/><rect x="0" y="6" width="9" height="1" fill="#000"/><rect x="3" y="2" width="1" height="7" fill="#000"/><rect x="5" y="2" width="1" height="7" fill="#000"/></svg>
<div class="t " style="left:706px;top:179px;">по</div>
<div class="a" style="left:722px;top:176px;width:80px;height:19px;background:#fff;border:1px solid #8b8578"></div>
<div class="t " style="left:725px;top:179px;">31.01.2022</div>
<div class="a" style="left:787px;top:177px;width:14px;height:17px;background:#ebe6dc;border-left:1px solid #c8c2b6"></div>
<svg class="a" style="left:790px;top:181px" width="9" height="9" shape-rendering="crispEdges"><rect x="0" y="0" width="9" height="9" fill="#fff"/><rect x="0" y="0" width="9" height="2" fill="#000"/><rect x="0" y="2" width="1" height="7" fill="#000"/><rect x="8" y="2" width="1" height="7" fill="#000"/><rect x="0" y="8" width="9" height="1" fill="#000"/><rect x="0" y="4" width="9" height="1" fill="#000"/><rect x="0" y="6" width="9" height="1" fill="#000"/><rect x="3" y="2" width="1" height="7" fill="#000"/><rect x="5" y="2" width="1" height="7" fill="#000"/></svg>
<div class="a" style="left:804px;top:176px;width:20px;height:19px;background:#e9e4d9;border:1px solid #bfb9ad;border-radius:2px"></div>
<div class="t " style="left:808px;top:179px;">...</div>
<div class="t b" style="left:565px;top:201px;color:#8c8477;font-size:12px">Параметры</div>
<div class="a" style="left:565px;top:216px;width:684px;height:1px;background:#a8a296"></div>
<div class="a" style="left:565px;top:226px;width:13px;height:13px;background:#fff;border:1px solid #7a7468"></div>
<div class="t " style="left:578px;top:226px;">Отрицательное красным</div>
<div class="a" style="left:715px;top:226px;width:13px;height:13px;background:#fff;border:1px solid #7a7468"></div>
<svg class="a" style="left:717px;top:228px" width="9" height="9"><path d="M1 4.5L3.5 7L8 1.5" stroke="#000" stroke-width="2" fill="none"/></svg>
<div class="t " style="left:729px;top:226px;">Выводить общие итоги</div>
<div class="a" style="left:856px;top:226px;width:13px;height:13px;background:#fff;border:1px solid #7a7468"></div>
<div class="t " style="left:869px;top:226px;">Выводить детальные записи</div>
<div class="a" style="left:1026px;top:226px;width:13px;height:13px;background:#fff;border:1px solid #7a7468"></div>
<svg class="a" style="left:1028px;top:228px" width="9" height="9"><path d="M1 4.5L3.5 7L8 1.5" stroke="#000" stroke-width="2" fill="none"/></svg>
<div class="t " style="left:1039px;top:226px;">Использовать свойства и категории</div>
<div class="t b" style="left:565px;top:248px;color:#8c8477;font-size:12px">Показатели</div>
<div class="a" style="left:565px;top:263px;width:214px;height:1px;background:#a8a296"></div>
<div class="t b" style="left:799px;top:248px;color:#8c8477;font-size:12px">Группировки строк</div>
<div class="a" style="left:799px;top:263px;width:210px;height:1px;background:#a8a296"></div>
<div class="t b" style="left:1039px;top:248px;color:#8c8477;font-size:12px">Группировки колонок</div>
<div class="a" style="left:1039px;top:263px;width:210px;height:1px;background:#a8a296"></div>
<svg class="a" style="left:569px;top:269px" width="16" height="16"><rect x="6.5" y="1.5" width="8" height="8" fill="#fff" stroke="#444"/><rect x="3.5" y="4.5" width="8" height="8" fill="#fff" stroke="#444"/><rect x=".5" y="7.5" width="8" height="8" fill="#fff" stroke="#444"/><path d="M1.5 11L4 14L14 2" stroke="#000" stroke-width="2" fill="none"/></svg>
<svg class="a" style="left:592px;top:269px" width="16" height="16"><rect x="6.5" y="1.5" width="8" height="8" fill="#fff" stroke="#666"/><rect x="3.5" y="4.5" width="8" height="8" fill="#fff" stroke="#666"/><rect x=".5" y="7.5" width="8" height="8" fill="#fff" stroke="#666"/></svg>
<div class="a" style="left:614px;top:268px;width:1px;height:18px;background:#cdc7bb"></div>
<div class="a" style="left:615px;top:268px;width:1px;height:18px;background:#fff"></div>
<svg class="a" style="left:622px;top:270px" width="11" height="15"><path d="M5.5 0L11 6H7.5V15H3.5V6H0z" fill="#2c2f96"/></svg>
<svg class="a" style="left:645px;top:270px" width="11" height="15"><path d="M5.5 15L11 9H7.5V0H3.5V9H0z" fill="#2c2f96"/></svg>
<div class="a" style="left:665px;top:268px;width:1px;height:18px;background:#cdc7bb"></div>
<div class="a" style="left:666px;top:268px;width:1px;height:18px;background:#fff"></div>
<svg class="a" style="left:671px;top:269px" width="17" height="17"><rect x="3" y="1" width="8" height="3" fill="#b9c0e6"/><rect x="3" y="5" width="8" height="3" fill="#b9c0e6"/><rect x="3" y="9" width="8" height="3" fill="#b9c0e6"/><rect x="3" y="13" width="8" height="3" fill="#b9c0e6"/><path d="M2 0v14M0 12l2 3l2-3M2 8h8" stroke="#2c2f96" stroke-width="1.2" fill="none"/><text x="11.5" y="7" font-size="7" font-family="Liberation Mono" font-weight="bold" fill="#2c2f96">A</text><text x="11.5" y="15" font-size="7" font-family="Liberation Mono" font-weight="bold" fill="#d01010">Z</text></svg>
<svg class="a" style="left:694px;top:269px" width="17" height="17"><rect x="3" y="1" width="8" height="3" fill="#b9c0e6"/><rect x="3" y="5" width="8" height="3" fill="#b9c0e6"/><rect x="3" y="9" width="8" height="3" fill="#b9c0e6"/><rect x="3" y="13" width="8" height="3" fill="#b9c0e6"/><path d="M2 0v14M0 12l2 3l2-3M2 8h8" stroke="#2c2f96" stroke-width="1.2" fill="none"/><text x="11.5" y="7" font-size="7" font-family="Liberation Mono" font-weight="bold" fill="#d01010">Z</text><text x="11.5" y="15" font-size="7" font-family="Liberation Mono" font-weight="bold" fill="#2c2f96">A</text></svg>
<svg class="a" style="left:803px;top:269px" width="17" height="17" viewBox="0 0 17 17"><rect x="6.5" y="1.5" width="10" height="5" fill="#c3c8ee" stroke="#9aa0dc" stroke-width="1"/><path d="M7 4h9" stroke="#e6e8fa"/><rect x="6.5" y="10.5" width="10" height="5" fill="#c3c8ee" stroke="#9aa0dc" stroke-width="1"/><path d="M7 13h9" stroke="#e6e8fa"/><rect x="3.5" y="6.5" width="10" height="3.5" fill="#c8cdf0" stroke="#2a5a9a" stroke-width="1"/><circle cx="3.5" cy="3.5" r="2.6" fill="#fff8c0" stroke="#f2d000" stroke-width="1.3"/></svg>
<svg class="a" style="left:826px;top:269px" width="17" height="17" viewBox="0 0 17 17"><rect x="6.5" y="1.5" width="10" height="5" fill="#c3c8ee" stroke="#9aa0dc" stroke-width="1"/><path d="M7 4h9" stroke="#e6e8fa"/><rect x="6.5" y="10.5" width="10" height="5" fill="#c3c8ee" stroke="#9aa0dc" stroke-width="1"/><path d="M7 13h9" stroke="#e6e8fa"/><rect x="3.5" y="6.5" width="10" height="3.5" fill="#c8cdf0" stroke="#2a5a9a" stroke-width="1"/><path d="M0.8 0.8L6.2 6.2M6.2 0.8L0.8 6.2" stroke="#e8420e" stroke-width="1.7"/></svg>
<svg class="a" style="left:851px;top:270px" width="11" height="15"><path d="M5.5 0L11 6H7.5V15H3.5V6H0z" fill="#a9abb8"/></svg>
<svg class="a" style="left:874px;top:270px" width="11" height="15"><path d="M5.5 15L11 9H7.5V0H3.5V9H0z" fill="#2c2f96"/></svg>
<svg class="a" style="left:1043px;top:269px" width="17" height="17" viewBox="0 0 17 17"><rect x="6.5" y="1.5" width="10" height="5" fill="#c3c8ee" stroke="#9aa0dc" stroke-width="1"/><path d="M7 4h9" stroke="#e6e8fa"/><rect x="6.5" y="10.5" width="10" height="5" fill="#c3c8ee" stroke="#9aa0dc" stroke-width="1"/><path d="M7 13h9" stroke="#e6e8fa"/><rect x="3.5" y="6.5" width="10" height="3.5" fill="#c8cdf0" stroke="#2a5a9a" stroke-width="1"/><circle cx="3.5" cy="3.5" r="2.6" fill="#fff8c0" stroke="#f2d000" stroke-width="1.3"/></svg>
<svg class="a" style="left:1066px;top:269px" width="17" height="17" viewBox="0 0 17 17"><rect x="6.5" y="1.5" width="10" height="5" fill="#c3c8ee" stroke="#9aa0dc" stroke-width="1"/><path d="M7 4h9" stroke="#e6e8fa"/><rect x="6.5" y="10.5" width="10" height="5" fill="#c3c8ee" stroke="#9aa0dc" stroke-width="1"/><path d="M7 13h9" stroke="#e6e8fa"/><rect x="3.5" y="6.5" width="10" height="3.5" fill="#c8cdf0" stroke="#2a5a9a" stroke-width="1"/><path d="M0.8 0.8L6.2 6.2M6.2 0.8L0.8 6.2" stroke="#e8420e" stroke-width="1.7"/></svg>
<svg class="a" style="left:1091px;top:270px" width="11" height="15"><path d="M5.5 0L11 6H7.5V15H3.5V6H0z" fill="#a9abb8"/></svg>
<svg class="a" style="left:1114px;top:270px" width="11" height="15"><path d="M5.5 15L11 9H7.5V0H3.5V9H0z" fill="#a9abb8"/></svg>
<div class="a" style="left:565px;top:289px;width:214px;height:149px;background:#fff;border:1px solid #8b8578"></div>
<div class="a" style="left:566px;top:290px;width:198px;height:14px;background:#d4cfc6"></div>
<div class="t " style="left:567px;top:290px;line-height:15px">Представление</div>
<div class="a" style="left:566px;top:304px;width:198px;height:1px;background:#a6a092"></div>
<div class="a" style="left:589px;top:307px;width:13px;height:13px;background:#fff;border:1px solid #7a7468"></div>
<div class="a" style="left:603px;top:305px;width:64px;height:16px;background:#000080"></div>
<div class="t " style="left:605px;top:306px;color:#fff">Количество</div>
<div class="a" style="left:580px;top:313px;width:9px;height:0;border-top:1px dotted #333"></div>
<div class="a" style="left:566px;top:321px;width:198px;height:1px;background:#a6a092"></div>
<div class="a" style="left:589px;top:324px;width:13px;height:13px;background:#fff;border:1px solid #7a7468"></div>
<svg class="a" style="left:591px;top:326px" width="9" height="9"><path d="M1 4.5L3.5 7L8 1.5" stroke="#000" stroke-width="2" fill="none"/></svg>
<div class="t" style="left:605px;top:323px;width:158px;overflow:hidden">Сумма продажи в руб.</div>
<div class="a" style="left:580px;top:330px;width:9px;height:0;border-top:1px dotted #333"></div>
<div class="a" style="left:566px;top:338px;width:198px;height:1px;background:#a6a092"></div>
<div class="a" style="left:589px;top:341px;width:13px;height:13px;background:#fff;border:1px solid #7a7468"></div>
<div class="t" style="left:605px;top:340px;width:158px;overflow:hidden">Сумма продажи без скидок в руб.</div>
<div class="a" style="left:580px;top:347px;width:9px;height:0;border-top:1px dotted #333"></div>
<div class="a" style="left:566px;top:355px;width:198px;height:1px;background:#a6a092"></div>
<div class="a" style="left:589px;top:358px;width:13px;height:13px;background:#fff;border:1px solid #7a7468"></div>
<div class="t" style="left:605px;top:357px;width:158px;overflow:hidden">НДС</div>
<div class="a" style="left:580px;top:364px;width:9px;height:0;border-top:1px dotted #333"></div>
<div class="a" style="left:566px;top:372px;width:198px;height:1px;background:#a6a092"></div>
<div class="a" style="left:589px;top:375px;width:13px;height:13px;background:#fff;border:1px solid #7a7468"></div>
<div class="t" style="left:605px;top:374px;width:158px;overflow:hidden">Количество (в ед. отчетов)</div>
<div class="a" style="left:580px;top:381px;width:9px;height:0;border-top:1px dotted #333"></div>
<div class="a" style="left:566px;top:389px;width:198px;height:1px;background:#a6a092"></div>
<div class="a" style="left:589px;top:392px;width:13px;height:13px;background:#fff;border:1px solid #7a7468"></div>
<div class="t" style="left:605px;top:391px;width:158px;overflow:hidden">Количество (в базовых единицах)</div>
<div class="a" style="left:580px;top:398px;width:9px;height:0;border-top:1px dotted #333"></div>
<div class="a" style="left:566px;top:406px;width:198px;height:1px;background:#a6a092"></div>
<div class="a" style="left:589px;top:409px;width:13px;height:13px;background:#fff;border:1px solid #7a7468"></div>
<div class="t" style="left:605px;top:408px;width:158px;overflow:hidden">Сумма скидки в руб.</div>
<div class="a" style="left:580px;top:415px;width:9px;height:0;border-top:1px dotted #333"></div>
<div class="a" style="left:579px;top:310px;width:0;height:113px;border-left:1px dotted #333"></div>
<div class="a" style="left:764px;top:290px;width:14px;height:133px;background:#f9f7f1"></div>
<div class="a" style="left:766px;top:291px;width:11px;height:11px;background:#f1eee6;border:1px solid #d9d4c9;border-radius:1px"></div>
<svg class="a" style="left:767px;top:293px" width="9" height="6"><path d="M0.5 5L4.5 1L8.5 5" stroke="#222" stroke-width="1.2" fill="none"/></svg>
<div class="a" style="left:766px;top:303px;width:11px;height:79px;background:linear-gradient(90deg,#ece9e1,#dcd8ce);border:1px solid #cfcabe;border-radius:1px"></div>
<div class="a" style="left:766px;top:412px;width:11px;height:11px;background:#f1eee6;border:1px solid #d9d4c9;border-radius:1px"></div>
<svg class="a" style="left:767px;top:415px" width="9" height="6"><path d="M0.5 1L4.5 5L8.5 1" stroke="#222" stroke-width="1.2" fill="none"/></svg>
<div class="a" style="left:566px;top:423px;width:198px;height:14px;background:#f9f7f1"></div>
<div class="a" style="left:764px;top:423px;width:14px;height:14px;background:#d4d0c8"></div>
<div class="a" style="left:567px;top:425px;width:12px;height:11px;background:#f1eee6;border:1px solid #d9d4c9;border-radius:1px"></div>
<svg class="a" style="left:570px;top:426px" width="6" height="9"><path d="M5 0.5L1 4.5L5 8.5" stroke="#222" stroke-width="1.2" fill="none"/></svg>
<div class="a" style="left:580px;top:425px;width:158px;height:11px;background:linear-gradient(#ece9e1,#dcd8ce);border:1px solid #cfcabe;border-radius:1px"></div>
<div class="a" style="left:752px;top:425px;width:11px;height:11px;background:#f1eee6;border:1px solid #d9d4c9;border-radius:1px"></div>
<svg class="a" style="left:755px;top:426px" width="6" height="9"><path d="M1 0.5L5 4.5L1 8.5" stroke="#222" stroke-width="1.2" fill="none"/></svg>
<div class="a" style="left:799px;top:289px;width:210px;height:149px;background:#fff;border:1px solid #8b8578"></div>
<div class="a" style="left:800px;top:290px;width:148px;height:14px;background:#d4cfc6"></div>
<div class="a" style="left:948px;top:290px;width:60px;height:14px;background:#ebe6dc"></div>
<div class="a" style="left:948px;top:290px;width:1px;height:48px;background:#a6a092"></div>
<div class="t " style="left:802px;top:290px;line-height:15px">Группировки строк</div>
<div class="t " style="left:950px;top:290px;line-height:15px">Тип</div>
<div class="a" style="left:800px;top:304px;width:208px;height:1px;background:#a6a092"></div>
<div class="a" style="left:800px;top:305px;width:148px;height:16px;background:#000080"></div>
<div class="t " style="left:802px;top:306px;color:#fff">По месяцам</div>
<div class="t " style="left:950px;top:306px;">Элементы</div>
<div class="a" style="left:800px;top:321px;width:208px;height:1px;background:#a6a092"></div>
<div class="t " style="left:802px;top:323px;">Номенклатура</div>
<div class="t " style="left:950px;top:323px;">Элементы</div>
<div class="a" style="left:800px;top:338px;width:208px;height:1px;background:#a6a092"></div>
<div class="a" style="left:1039px;top:289px;width:210px;height:149px;background:#fff;border:1px solid #8b8578"></div>
<div class="a" style="left:1040px;top:290px;width:148px;height:14px;background:#d4cfc6"></div>
<div class="a" style="left:1188px;top:290px;width:60px;height:14px;background:#ebe6dc"></div>
<div class="a" style="left:1188px;top:290px;width:1px;height:31px;background:#a6a092"></div>
<div class="t " style="left:1042px;top:290px;line-height:15px">Группировки колонок</div>
<div class="t " style="left:1190px;top:290px;line-height:15px">Тип</div>
<div class="a" style="left:1040px;top:304px;width:208px;height:1px;background:#a6a092"></div>
<div class="a" style="left:1040px;top:305px;width:148px;height:16px;background:#000080"></div>
<div class="t " style="left:1042px;top:306px;color:#fff">Подразделение</div>
<div class="t " style="left:1190px;top:306px;">Элементы</div>
<div class="a" style="left:1040px;top:321px;width:208px;height:1px;background:#a6a092"></div>
<svg class="a" style="left:1016px;top:345px" width="15" height="10"><path d="M0 3H8V0L15 5L8 10V7H0z" fill="#2c2f96"/></svg>
<svg class="a" style="left:1016px;top:368px" width="15" height="10"><path d="M15 3H7V0L0 5L7 10V7H15z" fill="#2c2f96"/></svg>
<div class="t b" style="left:565px;top:445px;color:#8c8477;font-size:12px">Отборы</div>
<div class="a" style="left:565px;top:459px;width:684px;height:1px;background:#a8a296"></div>
<svg class="a" style="left:569px;top:465px" width="17" height="17" viewBox="0 0 17 17"><rect x="6.5" y="1.5" width="10" height="5" fill="#c3c8ee" stroke="#9aa0dc" stroke-width="1"/><path d="M7 4h9" stroke="#e6e8fa"/><rect x="6.5" y="10.5" width="10" height="5" fill="#c3c8ee" stroke="#9aa0dc" stroke-width="1"/><path d="M7 13h9" stroke="#e6e8fa"/><rect x="3.5" y="6.5" width="10" height="3.5" fill="#c8cdf0" stroke="#2a5a9a" stroke-width="1"/><circle cx="3.5" cy="3.5" r="2.6" fill="#fff8c0" stroke="#f2d000" stroke-width="1.3"/></svg>
<svg class="a" style="left:592px;top:465px" width="17" height="17" viewBox="0 0 17 17"><rect x="6.5" y="1.5" width="10" height="5" fill="#c3c8ee" stroke="#9aa0dc" stroke-width="1"/><path d="M7 4h9" stroke="#e6e8fa"/><rect x="6.5" y="10.5" width="10" height="5" fill="#c3c8ee" stroke="#9aa0dc" stroke-width="1"/><path d="M7 13h9" stroke="#e6e8fa"/><rect x="3.5" y="6.5" width="10" height="3.5" fill="#c8cdf0" stroke="#2a5a9a" stroke-width="1"/><path d="M0.8 0.8L6.2 6.2M6.2 0.8L0.8 6.2" stroke="#e8420e" stroke-width="1.7"/></svg>
<svg class="a" style="left:615px;top:464px" width="16" height="16"><rect x="6.5" y="1.5" width="8" height="8" fill="#fff" stroke="#444"/><rect x="3.5" y="4.5" width="8" height="8" fill="#fff" stroke="#444"/><rect x=".5" y="7.5" width="8" height="8" fill="#fff" stroke="#444"/><path d="M1.5 11L4 14L14 2" stroke="#000" stroke-width="2" fill="none"/></svg>
<svg class="a" style="left:638px;top:464px" width="16" height="16"><rect x="6.5" y="1.5" width="8" height="8" fill="#fff" stroke="#666"/><rect x="3.5" y="4.5" width="8" height="8" fill="#fff" stroke="#666"/><rect x=".5" y="7.5" width="8" height="8" fill="#fff" stroke="#666"/></svg>
<div class="a" style="left:565px;top:486px;width:684px;height:149px;background:#fff;border:1px solid #8b8578"></div>
<div class="a" style="left:566px;top:487px;width:19px;height:14px;background:#ebe6dc"></div>
<div class="a" style="left:585px;top:487px;width:184px;height:14px;background:#d4cfc6"></div>
<div class="a" style="left:769px;top:487px;width:479px;height:14px;background:#ebe6dc"></div>
<div class="a" style="left:585px;top:487px;width:1px;height:81px;background:#a6a092"></div>
<div class="a" style="left:769px;top:487px;width:1px;height:81px;background:#a6a092"></div>
<div class="a" style="left:879px;top:487px;width:1px;height:81px;background:#a6a092"></div>
<div class="t " style="left:587px;top:486px;">Поле</div>
<div class="t " style="left:771px;top:486px;">Тип сравнения</div>
<div class="t " style="left:881px;top:486px;">Значение</div>
<div class="a" style="left:566px;top:500px;width:682px;height:1px;background:#a6a092"></div>
<div class="a" style="left:568px;top:502px;width:13px;height:13px;background:#fff;border:1px solid #7a7468"></div>
<div class="a" style="left:586px;top:501px;width:183px;height:16px;background:#000080"></div>
<div class="t " style="left:588px;top:502px;color:#fff">Контрагент</div>
<div class="t " style="left:771px;top:502px;">Равно</div>
<div class="a" style="left:566px;top:517px;width:682px;height:1px;background:#a6a092"></div>
<div class="a" style="left:568px;top:519px;width:13px;height:13px;background:#fff;border:1px solid #7a7468"></div>
<svg class="a" style="left:570px;top:521px" width="9" height="9"><path d="M1 4.5L3.5 7L8 1.5" stroke="#000" stroke-width="2" fill="none"/></svg>
<div class="t " style="left:588px;top:519px;">Номенклатура</div>
<div class="t " style="left:771px;top:519px;">В группе</div>
<div class="t " style="left:881px;top:519px;">ОБОИ в&nbsp; ассортименте</div>
<div class="a" style="left:566px;top:534px;width:682px;height:1px;background:#a6a092"></div>
<div class="a" style="left:568px;top:536px;width:13px;height:13px;background:#fff;border:1px solid #7a7468"></div>
<div class="t " style="left:588px;top:536px;">Проект</div>
<div class="t " style="left:771px;top:536px;">Равно</div>
<div class="a" style="left:566px;top:551px;width:682px;height:1px;background:#a6a092"></div>
<div class="a" style="left:568px;top:553px;width:13px;height:13px;background:#fff;border:1px solid #7a7468"></div>
<svg class="a" style="left:570px;top:555px" width="9" height="9"><path d="M1 4.5L3.5 7L8 1.5" stroke="#000" stroke-width="2" fill="none"/></svg>
<div class="t " style="left:588px;top:553px;">Подразделение</div>
<div class="t " style="left:771px;top:553px;">Не равно</div>
<div class="a" style="left:566px;top:568px;width:682px;height:1px;background:#a6a092"></div>
<div class="a" style="left:565px;top:649px;width:13px;height:13px;background:#fff;border:1px solid #7a7468"></div>
<div class="t " style="left:579px;top:649px;">Расширенная настройка</div>
<div class="a" style="left:578px;top:647px;width:127px;height:17px;border:1px dotted #333"></div>
<svg class="a" style="left:1068px;top:650px" width="7" height="12"><path d="M0 0L7 6L0 12z" fill="#1e9a1e"/></svg>
<div class="t b" style="left:1081px;top:649px;font-size:12px;letter-spacing:-0.3px">Сформировать</div>
<div class="a" style="left:1176px;top:646px;width:1px;height:20px;background:#cdc7bb"></div>
<div class="a" style="left:1177px;top:646px;width:1px;height:20px;background:#fff"></div>
<div class="t " style="left:1183px;top:649px;font-size:11px">OK</div>
<div class="a" style="left:1205px;top:646px;width:1px;height:20px;background:#cdc7bb"></div>
<div class="a" style="left:1206px;top:646px;width:1px;height:20px;background:#fff"></div>
<div class="t " style="left:1212px;top:649px;font-size:11px">Отмена</div>
<div class="a" style="left:9px;top:45px;width:141px;height:838px;border:3px solid #e2382e;border-radius:6px"></div>
<svg class="a" style="left:0;top:0" width="1260" height="885"><line x1="723.7" y1="36.3" x2="167" y2="448" stroke="#e2382e" stroke-width="4.2" stroke-linecap="round"/><path d="M149.5 459.5L163 432.5L168 447L179.5 454.5z" fill="#e2382e" stroke="#e2382e" stroke-width="0.8" stroke-linejoin="round"/></svg>
</body></html>
